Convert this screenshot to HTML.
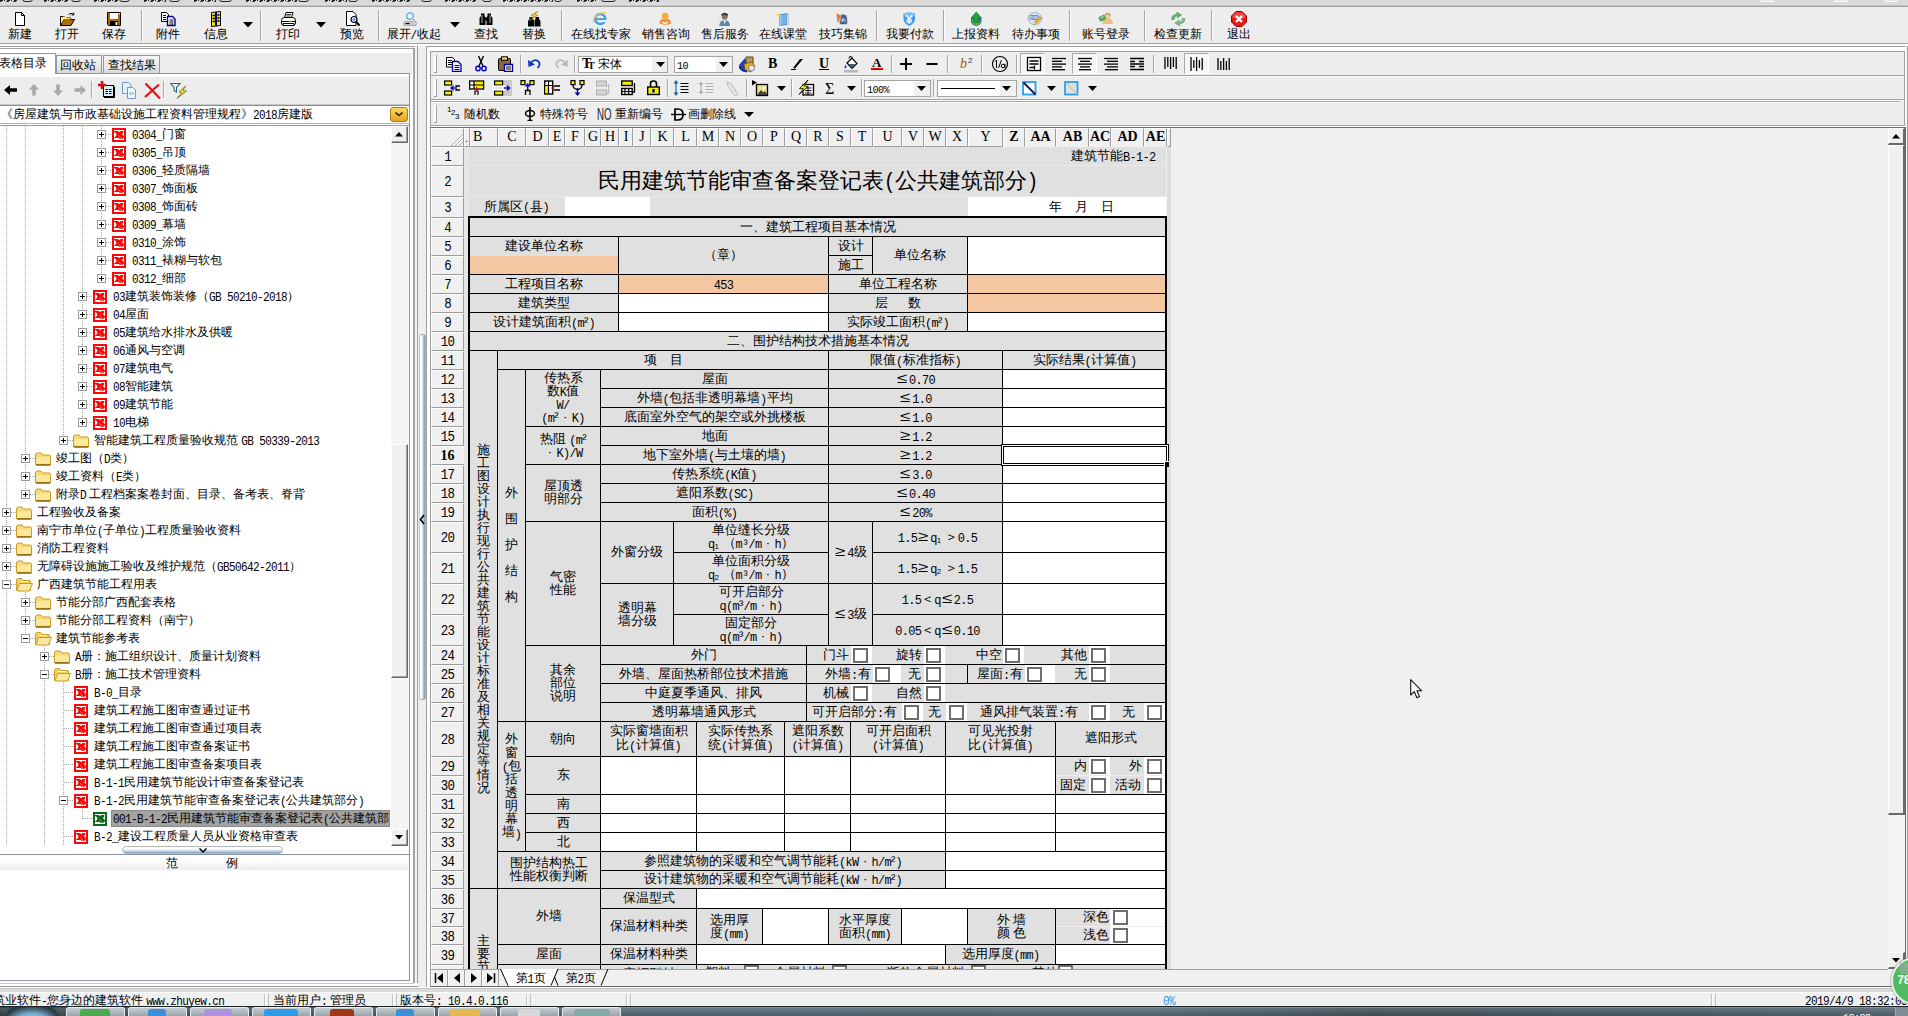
<!DOCTYPE html>
<html><head><meta charset="utf-8"><title>UI</title>
<style>
html,body{margin:0;padding:0}
body{width:1908px;height:1016px;overflow:hidden;background:#f0f0f0;position:relative;font-family:"Liberation Sans",sans-serif;font-size:12px;color:#000}
div,span.t,svg{position:absolute}
div{box-sizing:border-box;overflow:hidden}
span.t{white-space:nowrap;display:block}
span.c{text-align:center}
span.d{display:inline-block;width:1em;text-align:center;line-height:1}
span.w{display:inline-block;width:1em;text-align:center;transform:scale(1.45,1.1);line-height:1}
span.a{font-family:'Liberation Mono',monospace;font-size:92%;letter-spacing:-.0565em;display:inline-block;transform:scaleY(1.12);transform-origin:50% 78%;white-space:pre;position:relative;top:2.800px;line-height:1;vertical-align:top}
.cell{border:1px solid #000;background:#e0e0e0}
.cw{background:#fff}
.cp{background:#f4c7a1}
.sf{font-size:13px}
.cb{border:2px solid #6e6e6e;background:#fff}

.sc>span{position:relative;top:-1px}
.sc span.a,.s13 span.a{top:4.300px}
.sc{display:flex;align-items:center;justify-content:center;text-align:center;font-size:13px;line-height:13px;white-space:nowrap}
.nb{background:#e0e0e0}
</style></head><body>
<div style="left:0px;top:0px;width:1908px;height:6px;background:linear-gradient(#d6d6d6,#dedede)"></div>
<div style="left:0px;top:0px;width:17px;height:2px;background:repeating-linear-gradient(90deg,#181818 0 3px,#d8d8d8 3px 4px,#333 4px 5px,#d8d8d8 5px 7px)"></div>
<div style="left:0px;top:1px;width:17px;height:1px;background:repeating-linear-gradient(90deg,#444 0 2px,#d8d8d8 2px 6px,#555 6px 7px)"></div>
<div style="left:44px;top:0px;width:25px;height:2px;background:repeating-linear-gradient(90deg,#181818 0 3px,#d8d8d8 3px 4px,#333 4px 5px,#d8d8d8 5px 7px)"></div>
<div style="left:44px;top:1px;width:25px;height:1px;background:repeating-linear-gradient(90deg,#444 0 2px,#d8d8d8 2px 6px,#555 6px 7px)"></div>
<div style="left:94px;top:0px;width:24px;height:2px;background:repeating-linear-gradient(90deg,#181818 0 3px,#d8d8d8 3px 4px,#333 4px 5px,#d8d8d8 5px 7px)"></div>
<div style="left:94px;top:1px;width:24px;height:1px;background:repeating-linear-gradient(90deg,#444 0 2px,#d8d8d8 2px 6px,#555 6px 7px)"></div>
<div style="left:144px;top:0px;width:22px;height:2px;background:repeating-linear-gradient(90deg,#181818 0 3px,#d8d8d8 3px 4px,#333 4px 5px,#d8d8d8 5px 7px)"></div>
<div style="left:144px;top:1px;width:22px;height:1px;background:repeating-linear-gradient(90deg,#444 0 2px,#d8d8d8 2px 6px,#555 6px 7px)"></div>
<div style="left:194px;top:0px;width:22px;height:2px;background:repeating-linear-gradient(90deg,#181818 0 3px,#d8d8d8 3px 4px,#333 4px 5px,#d8d8d8 5px 7px)"></div>
<div style="left:194px;top:1px;width:22px;height:1px;background:repeating-linear-gradient(90deg,#444 0 2px,#d8d8d8 2px 6px,#555 6px 7px)"></div>
<div style="left:246px;top:0px;width:51px;height:2px;background:repeating-linear-gradient(90deg,#181818 0 3px,#d8d8d8 3px 4px,#333 4px 5px,#d8d8d8 5px 7px)"></div>
<div style="left:246px;top:1px;width:51px;height:1px;background:repeating-linear-gradient(90deg,#444 0 2px,#d8d8d8 2px 6px,#555 6px 7px)"></div>
<div style="left:325px;top:0px;width:22px;height:2px;background:repeating-linear-gradient(90deg,#181818 0 3px,#d8d8d8 3px 4px,#333 4px 5px,#d8d8d8 5px 7px)"></div>
<div style="left:325px;top:1px;width:22px;height:1px;background:repeating-linear-gradient(90deg,#444 0 2px,#d8d8d8 2px 6px,#555 6px 7px)"></div>
<div style="left:372px;top:0px;width:39px;height:2px;background:repeating-linear-gradient(90deg,#181818 0 3px,#d8d8d8 3px 4px,#333 4px 5px,#d8d8d8 5px 7px)"></div>
<div style="left:372px;top:1px;width:39px;height:1px;background:repeating-linear-gradient(90deg,#444 0 2px,#d8d8d8 2px 6px,#555 6px 7px)"></div>
<div style="left:445px;top:0px;width:32px;height:2px;background:repeating-linear-gradient(90deg,#181818 0 3px,#d8d8d8 3px 4px,#333 4px 5px,#d8d8d8 5px 7px)"></div>
<div style="left:445px;top:1px;width:32px;height:1px;background:repeating-linear-gradient(90deg,#444 0 2px,#d8d8d8 2px 6px,#555 6px 7px)"></div>
<div style="left:503px;top:0px;width:50px;height:2px;background:repeating-linear-gradient(90deg,#181818 0 3px,#d8d8d8 3px 4px,#333 4px 5px,#d8d8d8 5px 7px)"></div>
<div style="left:503px;top:1px;width:50px;height:1px;background:repeating-linear-gradient(90deg,#444 0 2px,#d8d8d8 2px 6px,#555 6px 7px)"></div>
<div style="left:577px;top:0px;width:20px;height:2px;background:repeating-linear-gradient(90deg,#181818 0 3px,#d8d8d8 3px 4px,#333 4px 5px,#d8d8d8 5px 7px)"></div>
<div style="left:577px;top:1px;width:20px;height:1px;background:repeating-linear-gradient(90deg,#444 0 2px,#d8d8d8 2px 6px,#555 6px 7px)"></div>
<div style="left:629px;top:0px;width:30px;height:2px;background:repeating-linear-gradient(90deg,#181818 0 3px,#d8d8d8 3px 4px,#333 4px 5px,#d8d8d8 5px 7px)"></div>
<div style="left:629px;top:1px;width:30px;height:1px;background:repeating-linear-gradient(90deg,#444 0 2px,#d8d8d8 2px 6px,#555 6px 7px)"></div>
<div style="left:22px;top:-3px;width:11px;height:5px;border:1px solid #222;border-radius:0 0 3px 3px;background:#d8d8d8"></div>
<div style="left:71px;top:-3px;width:10px;height:5px;border:1px solid #222;border-radius:0 0 3px 3px;background:#d8d8d8"></div>
<div style="left:119px;top:-3px;width:11px;height:5px;border:1px solid #222;border-radius:0 0 3px 3px;background:#d8d8d8"></div>
<div style="left:169px;top:-3px;width:11px;height:5px;border:1px solid #222;border-radius:0 0 3px 3px;background:#d8d8d8"></div>
<div style="left:219px;top:-3px;width:13px;height:5px;border:1px solid #222;border-radius:0 0 3px 3px;background:#d8d8d8"></div>
<div style="left:298px;top:-3px;width:11px;height:5px;border:1px solid #222;border-radius:0 0 3px 3px;background:#d8d8d8"></div>
<div style="left:348px;top:-3px;width:10px;height:5px;border:1px solid #222;border-radius:0 0 3px 3px;background:#d8d8d8"></div>
<div style="left:421px;top:-3px;width:11px;height:5px;border:1px solid #222;border-radius:0 0 3px 3px;background:#d8d8d8"></div>
<div style="left:482px;top:-3px;width:10px;height:5px;border:1px solid #222;border-radius:0 0 3px 3px;background:#d8d8d8"></div>
<div style="left:554px;top:-3px;width:8px;height:5px;border:1px solid #222;border-radius:0 0 3px 3px;background:#d8d8d8"></div>
<div style="left:601px;top:-3px;width:15px;height:5px;border:1px solid #222;border-radius:0 0 3px 3px;background:#d8d8d8"></div>
<div style="left:1760px;top:0px;width:14px;height:2px;border:1px solid #fff;border-top:none;border-radius:0 0 2px 2px;background:#e8e4e0"></div>
<div style="left:1834px;top:0px;width:14px;height:2px;border:1px solid #fff;border-top:none;border-radius:0 0 2px 2px;background:#e8e4e0"></div>
<div style="left:1884px;top:0px;width:14px;height:2px;border:1px solid #fff;border-top:none;border-radius:0 0 2px 2px;background:#e8e4e0"></div>
<div style="left:0px;top:5px;width:1908px;height:1px;background:#c4c4c4"></div>
<div style="left:0px;top:6px;width:1908px;height:1px;background:#a2a2a2"></div>
<div style="left:0px;top:7px;width:1908px;height:36px;background:#ededed"></div>
<div style="left:0px;top:43px;width:1908px;height:1px;background:#a0a0a0"></div>
<div style="left:0px;top:44px;width:1908px;height:2px;background:#fff"></div>
<svg style="left:11.5px;top:11px" width="16" height="16" viewBox="0 0 16 16"><path d="M3.5 1.5h6l3 3v10h-9z" fill="#fff" stroke="#000"/><path d="M9.5 1.5v3h3" fill="none" stroke="#000"/></svg>
<span class="t c" style="left:-40.5px;top:28px;width:120px;font-size:12px;line-height:12px;">新建</span>
<svg style="left:58.5px;top:11px" width="16" height="16" viewBox="0 0 16 16"><path d="M1.5 5.5h4l1 1h5v2" fill="#ffe680" stroke="#000"/><path d="M1.5 14.5v-9" stroke="#000"/><path d="M1.5 14.5l3-6h11l-3.5 6z" fill="#a87000" stroke="#000"/><path d="M2 8l2-2.5h3l1 1h3.5v2H4.5L2 13z" fill="#ffec70"/><path d="M9.5 3.5q2.5-2.5 5 0M14.8 1.5v2.4h-2.4" fill="none" stroke="#000"/></svg>
<span class="t c" style="left:6.5px;top:28px;width:120px;font-size:12px;line-height:12px;">打开</span>
<svg style="left:105.5px;top:11px" width="16" height="16" viewBox="0 0 16 16"><path d="M1.5 1.5h13v13h-12l-1-1z" fill="#a86c00" stroke="#000"/><rect x="4" y="2" width="8" height="6" fill="#fff"/><rect x="4" y="10" width="8" height="4.5" fill="#000"/><rect x="9.5" y="11" width="1.8" height="3" fill="#fff"/><rect x="12.8" y="2.2" width="1.2" height="1.2" fill="#fff"/></svg>
<span class="t c" style="left:53.5px;top:28px;width:120px;font-size:12px;line-height:12px;">保存</span>
<div style="left:141px;top:10px;width:1px;height:31px;background:#a6a6a6"></div>
<div style="left:142px;top:10px;width:1px;height:31px;background:#fbfbfb"></div>
<svg style="left:160px;top:11px" width="16" height="16" viewBox="0 0 16 16"><path d="M1.5 1.5h5l2 2v7h-7z" fill="#fff" stroke="#000"/><path d="M3 4.5h3M3 6.5h3M3 8.5h3" stroke="#000"/><path d="M7.5 5.5h5l2.5 2.5v6.5h-7.5z" fill="#fff" stroke="#0000a0" stroke-width="1.4"/><path d="M9.5 9h4M9.5 11h4M9.5 13h4" stroke="#000"/></svg>
<span class="t c" style="left:108px;top:28px;width:120px;font-size:12px;line-height:12px;">附件</span>
<svg style="left:207.5px;top:11px" width="16" height="16" viewBox="0 0 16 16"><path d="M3.5 1.5l9-1v14l-9 1z" fill="#fff000" stroke="#000"/><path d="M8 1v14" stroke="#0000a0" stroke-width="2.2"/><path d="M4.5 4.5h2.4M4.5 7.5h2.4M4.5 10.5h2.4M9.4 4h2.2M9.4 7h2.2M9.4 10h2.2" stroke="#000" stroke-width="1.3"/></svg>
<span class="t c" style="left:155.5px;top:28px;width:120px;font-size:12px;line-height:12px;">信息</span>
<svg style="left:243px;top:22px" width="10" height="6" viewBox="0 0 10 6"><path d="M0 0h10l-5 5.5z" fill="#000"/></svg>
<div style="left:260px;top:10px;width:1px;height:31px;background:#a6a6a6"></div>
<div style="left:261px;top:10px;width:1px;height:31px;background:#fbfbfb"></div>
<svg style="left:279.5px;top:11px" width="16" height="16" viewBox="0 0 16 16"><path d="M4.5 6.5l1.5-5h7l-1.5 5z" fill="#fff" stroke="#000"/><path d="M6.5 3.5h4.5M6 5h4.5" stroke="#000" stroke-width=".8"/><path d="M1.5 9.5q0-3 3-3h8q3 0 3 3v2.500q0 2-2 2h-10q-2 0-2-2z" fill="#fff" stroke="#000"/><path d="M2 10.500h13" stroke="#000"/><path d="M3 12.5h11v2h-11z" fill="#fff" stroke="#000"/><rect x="8.500" y="9.6" width="3.500" height="1" fill="#f0d000"/></svg>
<span class="t c" style="left:227.5px;top:28px;width:120px;font-size:12px;line-height:12px;">打印</span>
<svg style="left:315.5px;top:22px" width="10" height="6" viewBox="0 0 10 6"><path d="M0 0h10l-5 5.5z" fill="#000"/></svg>
<svg style="left:343.5px;top:11px" width="16" height="16" viewBox="0 0 16 16"><path d="M2.500 .5h6.500l3 3v11h-9.500z" fill="#fff" stroke="#000"/><circle cx="10" cy="8.500" r="3" fill="#d8ecff" stroke="#000" stroke-width="1.200"/><circle cx="10" cy="8.500" r="1.300" fill="#3a8ee0"/><path d="M12.200 10.800l3.300 3.700" stroke="#000" stroke-width="2"/></svg>
<span class="t c" style="left:291.5px;top:28px;width:120px;font-size:12px;line-height:12px;">预览</span>
<div style="left:378px;top:10px;width:1px;height:31px;background:#a6a6a6"></div>
<div style="left:379px;top:10px;width:1px;height:31px;background:#fbfbfb"></div>
<svg style="left:403.25px;top:11.5px" width="16.5" height="14.025" viewBox="0 0 20 17"><rect x="1" y="11.500" width="15" height="5" rx="1" fill="#c8c8c8" stroke="#a0a0a0"/><path d="M3 14h5" stroke="#000" stroke-width="1.400"/><circle cx="8.500" cy="5" r="4" fill="#e8f6ff" stroke="#58a8e0" stroke-width="1.600"/><path d="M11.500 8l5 5.500" stroke="#f4f4ff" stroke-width="3.400"/><path d="M11.500 8l5 5.500" stroke="#4040a0" stroke-width="1"/></svg>
<span class="t c" style="left:353.5px;top:28px;width:120px;font-size:12px;line-height:12px;">展开<span class=a>/</span>收起</span>
<svg style="left:450px;top:22px" width="10" height="6" viewBox="0 0 10 6"><path d="M0 0h10l-5 5.5z" fill="#000"/></svg>
<svg style="left:478px;top:11px" width="16" height="16" viewBox="0 0 16 16"><path d="M1.500 14v-7l1.500-2v-2.500h3.500v2.500l1 1.500v7.500z" fill="#000"/><path d="M14.500 14v-7l-1.500-2v-2.500h-3.500v2.500l-1 1.500v7.500z" fill="#000"/><rect x="6.500" y="6.500" width="3" height="3" fill="#000"/><path d="M4 4v8M12 4v8" stroke="#fff" stroke-width=".7"/></svg>
<span class="t c" style="left:426px;top:28px;width:120px;font-size:12px;line-height:12px;">查找</span>
<svg style="left:525.5px;top:11px" width="16" height="16" viewBox="0 0 16 16"><path d="M2 15.500v-5.500l1.500-2v-2h3.500v2l1 1.500v6z" fill="#000"/><path d="M14.500 15.500v-5.500l-1.500-2v-2h-3.500v2l-1 1.500v6z" fill="#000"/><path d="M12 0l-7 4.500 3 .5-5 5 9-6-3.500-.5z" fill="#ffe000" stroke="#806000" stroke-width=".5"/></svg>
<span class="t c" style="left:473.5px;top:28px;width:120px;font-size:12px;line-height:12px;">替换</span>
<div style="left:561px;top:10px;width:1px;height:31px;background:#a6a6a6"></div>
<div style="left:562px;top:10px;width:1px;height:31px;background:#fbfbfb"></div>
<svg style="left:592.25px;top:11.5px" width="16.5" height="14.025" viewBox="0 0 20 17"><circle cx="10" cy="8.500" r="6" fill="none" stroke="#3fa0ec" stroke-width="3"/><rect x="5" y="7.500" width="11" height="2.200" fill="#3fa0ec"/><rect x="11" y="9.700" width="6" height="2.500" fill="#ededed"/><path d="M2 13q-2-5 6-10 6-3.500 9-1.500" fill="none" stroke="#f8c040" stroke-width="1.300"/></svg>
<span class="t c" style="left:540.5px;top:28px;width:120px;font-size:12px;line-height:12px;">在线找专家</span>
<svg style="left:657.25px;top:11.5px" width="16.5" height="14.025" viewBox="0 0 20 17"><ellipse cx="10" cy="13.500" rx="8" ry="3" fill="#f8e8d8"/><path d="M3 14q0-6 7-6t7 6q-7 3-14 0z" fill="#f09030"/><circle cx="10" cy="5" r="4.200" fill="#f6b040"/><path d="M6.500 12q3.500 3 7 0" stroke="#fff" stroke-width="1.600" fill="none"/></svg>
<span class="t c" style="left:605.5px;top:28px;width:120px;font-size:12px;line-height:12px;">销售咨询</span>
<svg style="left:716.25px;top:11.5px" width="16.5" height="14.025" viewBox="0 0 20 17"><path d="M4 17q0-7 6.500-7t6.500 7z" fill="#5f86a8"/><path d="M9 10l1.500 5 1.500-5z" fill="#fff"/><circle cx="10.500" cy="5.500" r="3.800" fill="#8a7260"/><path d="M7 4q3.500-4 7 0" stroke="#303030" stroke-width="2.200" fill="none"/><circle cx="5" cy="7" r="2.400" fill="#e8e8e8"/></svg>
<span class="t c" style="left:664.5px;top:28px;width:120px;font-size:12px;line-height:12px;">售后服务</span>
<svg style="left:774.75px;top:11.5px" width="16.5" height="14.025" viewBox="0 0 20 17"><path d="M5.500 3.500l9-1.500v13l-9 1.500z" fill="#6cb4e8" stroke="#3c7cb8"/><path d="M5.500 3.500l2 .5v13l-2-.5z" fill="#a8d4f4"/><path d="M14.500 2l2 1v12.500l-2 .5z" fill="#e0ecf4" stroke="#90a8c0" stroke-width=".6"/><path d="M4 .5l.8 2.200 2.200.8-2.200.8-.8 2.200-.8-2.200-2.200-.8 2.200-.8z" fill="#ffd020"/></svg>
<span class="t c" style="left:723px;top:28px;width:120px;font-size:12px;line-height:12px;">在线课堂</span>
<svg style="left:834.25px;top:11.5px" width="16.5" height="14.025" viewBox="0 0 20 17"><path d="M3 1.500l6 3-5 8z" fill="#f07040"/><path d="M9 4.500l6-1 1 9-7 2z" fill="#5890c8"/><path d="M4 12.500l5-8 3 10z" fill="#d0b090"/><path d="M9 3q5-1 7 5v7h-9z" fill="#405878" opacity=".85"/><circle cx="11.500" cy="10" r="2.500" fill="#c0d8f0"/><path d="M11 14l1.500-5" stroke="#203050"/></svg>
<span class="t c" style="left:782.5px;top:28px;width:120px;font-size:12px;line-height:12px;">技巧集锦</span>
<div style="left:876px;top:10px;width:1px;height:31px;background:#a6a6a6"></div>
<div style="left:877px;top:10px;width:1px;height:31px;background:#fbfbfb"></div>
<svg style="left:901.25px;top:11.5px" width="16.5" height="14.025" viewBox="0 0 20 17"><path d="M3 2q7-2.500 14 0v6q0 6-7 9-7-3-7-9z" fill="#3c9cf0"/><path d="M3 2q7-2.500 14 0v3q-7 3-14 0z" fill="#78c0f8"/><path d="M6.500 4l3.500 4.500 3.500-4.500M10 8.500v6M6.500 9.500h7M6.500 12h7" stroke="#fff" stroke-width="1.700" fill="none"/></svg>
<span class="t c" style="left:849.5px;top:28px;width:120px;font-size:12px;line-height:12px;">我要付款</span>
<div style="left:943px;top:10px;width:1px;height:31px;background:#a6a6a6"></div>
<div style="left:944px;top:10px;width:1px;height:31px;background:#fbfbfb"></div>
<svg style="left:967.75px;top:11.5px" width="16.5" height="14.025" viewBox="0 0 20 17"><circle cx="10" cy="10.500" r="6.500" fill="#2c70b8"/><path d="M5 9q3-2 4 1t4 1 2 3q-3 3-7 2t-3-7z" fill="#58b050"/><path d="M10 0l6.500 7.500h-3.500v5.500h-6v-5.500h-3.500z" fill="#20a038" stroke="#106020" stroke-width=".7"/></svg>
<span class="t c" style="left:916px;top:28px;width:120px;font-size:12px;line-height:12px;">上报资料</span>
<svg style="left:1027.25px;top:11.5px" width="16.5" height="14.025" viewBox="0 0 20 17"><ellipse cx="9.500" cy="8" rx="8.500" ry="7.500" fill="#d8e4f0" stroke="#98acc4"/><rect x="3" y="4" width="11" height="5.500" rx="1" fill="#3878c8"/><text x="8.500" y="8.600" font-size="5" font-weight="bold" font-family="Liberation Sans" fill="#fff" text-anchor="middle">DVD</text><path d="M8 15.500l1-3 6.500-7 2 2-6.500 7z" fill="#f0b030" stroke="#a06800" stroke-width=".6"/><path d="M8 15.500l1-3 2 2z" fill="#f8e0b0"/></svg>
<span class="t c" style="left:975.5px;top:28px;width:120px;font-size:12px;line-height:12px;">待办事项</span>
<div style="left:1069px;top:10px;width:1px;height:31px;background:#a6a6a6"></div>
<div style="left:1070px;top:10px;width:1px;height:31px;background:#fbfbfb"></div>
<svg style="left:1097.75px;top:11.5px" width="16.5" height="12.75" viewBox="0 0 22 17"><path d="M6 16q0-7 7-7t7 7z" fill="#e8c080"/><circle cx="13" cy="5.500" r="4" fill="#f0c890"/><path d="M9.500 4q3.500-4 7 0" stroke="#c89850" stroke-width="1.800" fill="none"/><path d="M1 7.500l7-3.500 2.500 5-7 3.500z" fill="#58a868" stroke="#2c7040" stroke-width=".7"/><path d="M3.500 8l4-2" stroke="#d0f0d8" stroke-width="1.200"/></svg>
<span class="t c" style="left:1046px;top:28px;width:120px;font-size:12px;line-height:12px;">账号登录</span>
<div style="left:1144px;top:10px;width:1px;height:31px;background:#a6a6a6"></div>
<div style="left:1145px;top:10px;width:1px;height:31px;background:#fbfbfb"></div>
<svg style="left:1169.75px;top:11.5px" width="16.5" height="14.025" viewBox="0 0 20 17"><path d="M2 9q0-6 7-6.500l-1-2.500 6 3.500-5 3.500v-2.500q-4 0-4 4.500z" fill="#68b868" stroke="#3c8848" stroke-width=".7"/><path d="M18 8q0 6-7 6.500l1 2.500-6-3.500 5-3.500v2.500q4 0 4-4.500z" fill="#88c088" stroke="#3c8848" stroke-width=".7"/></svg>
<span class="t c" style="left:1118px;top:28px;width:120px;font-size:12px;line-height:12px;">检查更新</span>
<div style="left:1211px;top:10px;width:1px;height:31px;background:#a6a6a6"></div>
<div style="left:1212px;top:10px;width:1px;height:31px;background:#fbfbfb"></div>
<svg style="left:1230.5px;top:11px" width="16" height="16" viewBox="0 0 16 16"><path d="M5 .500h6l4.500 4.500v6l-4.500 4.500h-6l-4.500-4.500v-6z" fill="#e81818" stroke="#a00000"/><path d="M5 1.500h6l3.500 3.500v1.500q-6.500 2.500-13 0v-1.500z" fill="#f86060" opacity=".7"/><path d="M5 5l6 6M11 5l-6 6" stroke="#fff" stroke-width="2.400"/></svg>
<span class="t c" style="left:1178.5px;top:28px;width:120px;font-size:12px;line-height:12px;">退出</span>
<div style="left:0px;top:46px;width:417px;height:942px;background:#fff"></div>
<div style="left:0px;top:46px;width:417px;height:1px;background:#a0a0a0"></div>
<div style="left:0px;top:48px;width:414px;height:1px;background:#a0a0a0"></div>
<div style="left:413px;top:48px;width:2px;height:938px;background:#a4a4a4"></div>
<div style="left:415px;top:46px;width:2px;height:942px;background:#f4f4f4"></div>
<div style="left:417px;top:45px;width:1px;height:944px;background:#a0a0a0"></div>
<div style="left:0px;top:53px;width:412px;height:21px;background:#ececec"></div>
<div style="left:56px;top:55px;width:46px;height:19px;background:linear-gradient(#f4f4f4,#eaeaea 50%,#d6d6d6);border:1px solid #8c98ac;border-bottom:none"></div>
<div style="left:103px;top:55px;width:57px;height:19px;background:linear-gradient(#f4f4f4,#eaeaea 50%,#d6d6d6);border:1px solid #8c98ac;border-bottom:none"></div>
<div style="left:-1px;top:53px;width:57px;height:22px;background:#fff;border:1px solid #8c98ac;border-bottom:none"></div>
<span class="t" style="left:-1px;top:57px;font-size:12px;line-height:12px;">表格目录</span>
<span class="t" style="left:60px;top:59px;font-size:12px;line-height:12px;">回收站</span>
<span class="t" style="left:108px;top:59px;font-size:12px;line-height:12px;">查找结果</span>
<div style="left:55px;top:73px;width:355px;height:1px;background:#8a94a6"></div>
<div style="left:409px;top:73px;width:1px;height:909px;background:#8a94a6"></div>
<div style="left:0px;top:74px;width:409px;height:3px;background:#fff"></div>
<div style="left:0px;top:77px;width:409px;height:27px;background:#ededed"></div>
<svg style="left:4px;top:85px" width="14" height="10" viewBox="0 0 14 10"><path d="M0 5l6-5v3.200h7v3.600h-7v3.200z" fill="#000"/></svg>
<svg style="left:29px;top:84px" width="10" height="12" viewBox="0 0 10 12"><path d="M5 0l5 5.500h-3.200v6h-3.600v-6h-3.200z" fill="#a8a8a8"/></svg>
<svg style="left:52.5px;top:84px" width="10" height="12" viewBox="0 0 10 12"><path d="M5 12l5-5.500h-3.200v-6h-3.600v6h-3.200z" fill="#a8a8a8"/></svg>
<svg style="left:74px;top:85px" width="12" height="10" viewBox="0 0 12 10"><path d="M12 5l-5.500-5v3.200h-6v3.600h6v3.200z" fill="#a8a8a8"/></svg>
<div style="left:91px;top:81px;width:1px;height:17px;background:#a6a6a6"></div>
<div style="left:92px;top:81px;width:1px;height:17px;background:#fbfbfb"></div>
<svg style="left:98px;top:81px" width="17" height="17" viewBox="0 0 17 17"><rect x="5.500" y="4.500" width="10" height="11" fill="#d8f0fc" stroke="#000"/><path d="M6 16.500h10.500v-11" stroke="#000" fill="none"/><path d="M7.500 8.500h6M7.500 10.500h6M7.500 12.500h6" stroke="#000" stroke-dasharray="2.500 1"/><path d="M4 0v8M0 4h8" stroke="#d01010" stroke-width="2.600"/></svg>
<svg style="left:121px;top:82px" width="16" height="17" viewBox="0 0 16 17"><path d="M1.500 .5h6l2.500 2.500v8.500h-8.500z" fill="#e4f0fc" stroke="#7098c8"/><path d="M6.500 5.500h5.500l2.500 2.500v8.500h-8z" fill="#f0f8ff" stroke="#7098c8"/><rect x="8" y="10" width="5" height="3" fill="#a8d8f0"/></svg>
<svg style="left:144px;top:83px" width="17" height="16" viewBox="0 0 17 16"><path d="M1.500 .5l14.500 15M15 1.500l-14 12.500" stroke="#e81010" stroke-width="2.200"/></svg>
<div style="left:163px;top:81px;width:1px;height:17px;background:#a6a6a6"></div>
<div style="left:164px;top:81px;width:1px;height:17px;background:#fbfbfb"></div>
<svg style="left:170px;top:82px" width="18" height="17" viewBox="0 0 18 17"><path d="M.5 1.500h9.500l-3.500 4v4.500l-2.500-1.500v-3z" fill="#e8f4f8" stroke="#286878" stroke-width="1.100"/><path d="M15.500 4l-6.500 6 3 .5-5 6 9.500-7.500-3.500-.5z" fill="#f8e820" stroke="#605820" stroke-width=".7"/></svg>
<div style="left:0px;top:104px;width:409px;height:1px;background:#c8c8c8"></div>
<div style="left:0px;top:105px;width:409px;height:1px;background:#8c8c8c"></div>
<div style="left:0px;top:106px;width:409px;height:17px;background:#fff"></div>
<span class="t" style="left:1px;top:108px;font-size:12px;line-height:12px;">《房屋建筑与市政基础设施工程资料管理规程》<span class=a>2018</span>房建版</span>
<div style="left:390px;top:107px;width:18px;height:15px;background:linear-gradient(#f9d860,#e3a820);border:1px solid #b07c10;border-radius:3px"></div>
<svg style="left:395px;top:112px" width="8" height="5" viewBox="0 0 8 5"><path d="M0.5 0.5l3.5 3 3.5-3" stroke="#402800" stroke-width="1.6" fill="none"/></svg>
<div style="left:0px;top:123px;width:409px;height:1px;background:#b4b4b4"></div>
<div style="left:0px;top:124px;width:409px;height:1px;background:#fff"></div>
<div style="left:0px;top:125px;width:409px;height:1px;background:#9c9c9c"></div>
<div style="left:418px;top:46px;width:8px;height:942px;background:#eeeeee"></div>
<div style="left:419px;top:334px;width:7px;height:366px;background:linear-gradient(90deg,#fff 0 35%,#b8cfe0 60%,#7f9db5 100%);border-radius:3px 3px 3px 3px;border:1px solid #b0b0b0;border-left-color:#c8c8c8"></div>
<svg style="left:419px;top:514px" width="6" height="11" viewBox="0 0 6 11"><path d="M5 1L1.5 5.5 5 10" stroke="#000" stroke-width="1.6" fill="none"/></svg>
<div style="left:426px;top:46px;width:1482px;height:942px;background:#fff"></div>
<div style="left:426px;top:46px;width:1px;height:942px;background:#a0a0a0"></div>
<div style="left:426px;top:46px;width:1482px;height:1px;background:#a0a0a0"></div>
<div style="left:430px;top:51px;width:1475px;height:75px;background:#ededed;border:1px solid #a0a0a0"></div>
<div style="left:431px;top:75px;width:1473px;height:1px;background:#a0a0a0"></div>
<div style="left:431px;top:76px;width:1473px;height:1px;background:#fbfbfb"></div>
<div style="left:431px;top:99px;width:1473px;height:1px;background:#a0a0a0"></div>
<div style="left:431px;top:100px;width:1473px;height:1px;background:#fbfbfb"></div>
<div style="left:431px;top:101px;width:1469px;height:1px;background:#a8a8a8"></div>
<div style="left:431px;top:102px;width:1469px;height:1px;background:#fbfbfb"></div>
<div style="left:1906px;top:46px;width:1px;height:942px;background:#f8f8f8"></div>
<div style="left:1907px;top:46px;width:1px;height:942px;background:#a0a0a0"></div>
<div style="left:0px;top:126px;width:409px;height:728px;background:#fff"></div>
<div style="left:6px;top:126px;width:1px;height:720px;background:repeating-linear-gradient(180deg,#a8a8a8 0 1px,transparent 1px 2px)"></div>
<div style="left:25px;top:126px;width:1px;height:369px;background:repeating-linear-gradient(180deg,#a8a8a8 0 1px,transparent 1px 2px)"></div>
<div style="left:63px;top:126px;width:1px;height:315px;background:repeating-linear-gradient(180deg,#a8a8a8 0 1px,transparent 1px 2px)"></div>
<div style="left:82px;top:126px;width:1px;height:297px;background:repeating-linear-gradient(180deg,#a8a8a8 0 1px,transparent 1px 2px)"></div>
<div style="left:101px;top:126px;width:1px;height:153px;background:repeating-linear-gradient(180deg,#a8a8a8 0 1px,transparent 1px 2px)"></div>
<div style="left:25px;top:592px;width:1px;height:47px;background:repeating-linear-gradient(180deg,#a8a8a8 0 1px,transparent 1px 2px)"></div>
<div style="left:44px;top:646px;width:1px;height:200px;background:repeating-linear-gradient(180deg,#a8a8a8 0 1px,transparent 1px 2px)"></div>
<div style="left:63px;top:682px;width:1px;height:164px;background:repeating-linear-gradient(180deg,#a8a8a8 0 1px,transparent 1px 2px)"></div>
<div style="left:82px;top:808px;width:1px;height:11px;background:repeating-linear-gradient(180deg,#a8a8a8 0 1px,transparent 1px 2px)"></div>
<div style="left:106px;top:134px;width:6px;height:1px;background:repeating-linear-gradient(90deg,#a8a8a8 0 1px,transparent 1px 2px)"></div>
<div style="left:97px;top:130px;width:9px;height:9px;background:#fff;border:1px solid #9a9a9a"></div>
<div style="left:99px;top:134px;width:5px;height:1px;background:#000"></div>
<div style="left:101px;top:132px;width:1px;height:5px;background:#000"></div>
<svg style="left:112px;top:128px" width="14" height="14" viewBox="0 0 14 14"><rect width="14" height="14" fill="#f80808"/><rect x="2" y="2" width="10" height="10" fill="#fff"/><path d="M2 3h3.700l1.500 1.100 1.500-1.100h2.500v1.700l-1.900 1.900h1.700v1.100h1v2h-1.200v1h-3.600l-.300-.700h-4.900v-.600l1.200-.300 1.300-2.600-1.500-2.300h-1z" fill="#f80808"/><path d="M6.500 7.400l2.200 2.700" stroke="#fff" stroke-width=".700" stroke-dasharray=".700 .600"/></svg>
<span class="t" style="left:132px;top:128px;font-size:12px;line-height:12px;"><span class=a>0304_</span>门窗</span>
<div style="left:106px;top:152px;width:6px;height:1px;background:repeating-linear-gradient(90deg,#a8a8a8 0 1px,transparent 1px 2px)"></div>
<div style="left:97px;top:148px;width:9px;height:9px;background:#fff;border:1px solid #9a9a9a"></div>
<div style="left:99px;top:152px;width:5px;height:1px;background:#000"></div>
<div style="left:101px;top:150px;width:1px;height:5px;background:#000"></div>
<svg style="left:112px;top:146px" width="14" height="14" viewBox="0 0 14 14"><rect width="14" height="14" fill="#f80808"/><rect x="2" y="2" width="10" height="10" fill="#fff"/><path d="M2 3h3.700l1.500 1.100 1.500-1.100h2.500v1.700l-1.900 1.900h1.700v1.100h1v2h-1.200v1h-3.600l-.300-.700h-4.900v-.600l1.200-.300 1.300-2.600-1.500-2.300h-1z" fill="#f80808"/><path d="M6.500 7.400l2.200 2.700" stroke="#fff" stroke-width=".700" stroke-dasharray=".700 .600"/></svg>
<span class="t" style="left:132px;top:146px;font-size:12px;line-height:12px;"><span class=a>0305_</span>吊顶</span>
<div style="left:106px;top:170px;width:6px;height:1px;background:repeating-linear-gradient(90deg,#a8a8a8 0 1px,transparent 1px 2px)"></div>
<div style="left:97px;top:166px;width:9px;height:9px;background:#fff;border:1px solid #9a9a9a"></div>
<div style="left:99px;top:170px;width:5px;height:1px;background:#000"></div>
<div style="left:101px;top:168px;width:1px;height:5px;background:#000"></div>
<svg style="left:112px;top:164px" width="14" height="14" viewBox="0 0 14 14"><rect width="14" height="14" fill="#f80808"/><rect x="2" y="2" width="10" height="10" fill="#fff"/><path d="M2 3h3.700l1.500 1.100 1.500-1.100h2.500v1.700l-1.900 1.900h1.700v1.100h1v2h-1.200v1h-3.600l-.300-.700h-4.900v-.600l1.200-.300 1.300-2.600-1.500-2.300h-1z" fill="#f80808"/><path d="M6.500 7.400l2.200 2.700" stroke="#fff" stroke-width=".700" stroke-dasharray=".700 .600"/></svg>
<span class="t" style="left:132px;top:164px;font-size:12px;line-height:12px;"><span class=a>0306_</span>轻质隔墙</span>
<div style="left:106px;top:188px;width:6px;height:1px;background:repeating-linear-gradient(90deg,#a8a8a8 0 1px,transparent 1px 2px)"></div>
<div style="left:97px;top:184px;width:9px;height:9px;background:#fff;border:1px solid #9a9a9a"></div>
<div style="left:99px;top:188px;width:5px;height:1px;background:#000"></div>
<div style="left:101px;top:186px;width:1px;height:5px;background:#000"></div>
<svg style="left:112px;top:182px" width="14" height="14" viewBox="0 0 14 14"><rect width="14" height="14" fill="#f80808"/><rect x="2" y="2" width="10" height="10" fill="#fff"/><path d="M2 3h3.700l1.500 1.100 1.500-1.100h2.500v1.700l-1.900 1.900h1.700v1.100h1v2h-1.200v1h-3.600l-.300-.700h-4.900v-.600l1.200-.300 1.300-2.600-1.500-2.300h-1z" fill="#f80808"/><path d="M6.500 7.400l2.200 2.700" stroke="#fff" stroke-width=".700" stroke-dasharray=".700 .600"/></svg>
<span class="t" style="left:132px;top:182px;font-size:12px;line-height:12px;"><span class=a>0307_</span>饰面板</span>
<div style="left:106px;top:206px;width:6px;height:1px;background:repeating-linear-gradient(90deg,#a8a8a8 0 1px,transparent 1px 2px)"></div>
<div style="left:97px;top:202px;width:9px;height:9px;background:#fff;border:1px solid #9a9a9a"></div>
<div style="left:99px;top:206px;width:5px;height:1px;background:#000"></div>
<div style="left:101px;top:204px;width:1px;height:5px;background:#000"></div>
<svg style="left:112px;top:200px" width="14" height="14" viewBox="0 0 14 14"><rect width="14" height="14" fill="#f80808"/><rect x="2" y="2" width="10" height="10" fill="#fff"/><path d="M2 3h3.700l1.500 1.100 1.500-1.100h2.500v1.700l-1.900 1.900h1.700v1.100h1v2h-1.200v1h-3.600l-.300-.700h-4.900v-.600l1.200-.300 1.300-2.600-1.500-2.300h-1z" fill="#f80808"/><path d="M6.500 7.400l2.200 2.700" stroke="#fff" stroke-width=".700" stroke-dasharray=".700 .600"/></svg>
<span class="t" style="left:132px;top:200px;font-size:12px;line-height:12px;"><span class=a>0308_</span>饰面砖</span>
<div style="left:106px;top:224px;width:6px;height:1px;background:repeating-linear-gradient(90deg,#a8a8a8 0 1px,transparent 1px 2px)"></div>
<div style="left:97px;top:220px;width:9px;height:9px;background:#fff;border:1px solid #9a9a9a"></div>
<div style="left:99px;top:224px;width:5px;height:1px;background:#000"></div>
<div style="left:101px;top:222px;width:1px;height:5px;background:#000"></div>
<svg style="left:112px;top:218px" width="14" height="14" viewBox="0 0 14 14"><rect width="14" height="14" fill="#f80808"/><rect x="2" y="2" width="10" height="10" fill="#fff"/><path d="M2 3h3.700l1.500 1.100 1.500-1.100h2.500v1.700l-1.900 1.900h1.700v1.100h1v2h-1.200v1h-3.600l-.300-.700h-4.900v-.600l1.200-.300 1.300-2.600-1.500-2.300h-1z" fill="#f80808"/><path d="M6.500 7.400l2.200 2.700" stroke="#fff" stroke-width=".700" stroke-dasharray=".700 .600"/></svg>
<span class="t" style="left:132px;top:218px;font-size:12px;line-height:12px;"><span class=a>0309_</span>幕墙</span>
<div style="left:106px;top:242px;width:6px;height:1px;background:repeating-linear-gradient(90deg,#a8a8a8 0 1px,transparent 1px 2px)"></div>
<div style="left:97px;top:238px;width:9px;height:9px;background:#fff;border:1px solid #9a9a9a"></div>
<div style="left:99px;top:242px;width:5px;height:1px;background:#000"></div>
<div style="left:101px;top:240px;width:1px;height:5px;background:#000"></div>
<svg style="left:112px;top:236px" width="14" height="14" viewBox="0 0 14 14"><rect width="14" height="14" fill="#f80808"/><rect x="2" y="2" width="10" height="10" fill="#fff"/><path d="M2 3h3.700l1.500 1.100 1.500-1.100h2.500v1.700l-1.900 1.900h1.700v1.100h1v2h-1.200v1h-3.600l-.300-.700h-4.900v-.600l1.200-.300 1.300-2.600-1.500-2.300h-1z" fill="#f80808"/><path d="M6.500 7.400l2.200 2.700" stroke="#fff" stroke-width=".700" stroke-dasharray=".700 .600"/></svg>
<span class="t" style="left:132px;top:236px;font-size:12px;line-height:12px;"><span class=a>0310_</span>涂饰</span>
<div style="left:106px;top:260px;width:6px;height:1px;background:repeating-linear-gradient(90deg,#a8a8a8 0 1px,transparent 1px 2px)"></div>
<div style="left:97px;top:256px;width:9px;height:9px;background:#fff;border:1px solid #9a9a9a"></div>
<div style="left:99px;top:260px;width:5px;height:1px;background:#000"></div>
<div style="left:101px;top:258px;width:1px;height:5px;background:#000"></div>
<svg style="left:112px;top:254px" width="14" height="14" viewBox="0 0 14 14"><rect width="14" height="14" fill="#f80808"/><rect x="2" y="2" width="10" height="10" fill="#fff"/><path d="M2 3h3.700l1.500 1.100 1.500-1.100h2.500v1.700l-1.900 1.900h1.700v1.100h1v2h-1.200v1h-3.600l-.300-.700h-4.900v-.600l1.200-.300 1.300-2.600-1.500-2.300h-1z" fill="#f80808"/><path d="M6.500 7.400l2.200 2.700" stroke="#fff" stroke-width=".700" stroke-dasharray=".700 .600"/></svg>
<span class="t" style="left:132px;top:254px;font-size:12px;line-height:12px;"><span class=a>0311_</span>裱糊与软包</span>
<div style="left:106px;top:278px;width:6px;height:1px;background:repeating-linear-gradient(90deg,#a8a8a8 0 1px,transparent 1px 2px)"></div>
<div style="left:97px;top:274px;width:9px;height:9px;background:#fff;border:1px solid #9a9a9a"></div>
<div style="left:99px;top:278px;width:5px;height:1px;background:#000"></div>
<div style="left:101px;top:276px;width:1px;height:5px;background:#000"></div>
<svg style="left:112px;top:272px" width="14" height="14" viewBox="0 0 14 14"><rect width="14" height="14" fill="#f80808"/><rect x="2" y="2" width="10" height="10" fill="#fff"/><path d="M2 3h3.700l1.500 1.100 1.500-1.100h2.500v1.700l-1.900 1.900h1.700v1.100h1v2h-1.200v1h-3.600l-.300-.700h-4.900v-.600l1.200-.300 1.300-2.600-1.500-2.300h-1z" fill="#f80808"/><path d="M6.500 7.400l2.200 2.700" stroke="#fff" stroke-width=".700" stroke-dasharray=".700 .600"/></svg>
<span class="t" style="left:132px;top:272px;font-size:12px;line-height:12px;"><span class=a>0312_</span>细部</span>
<div style="left:87px;top:296px;width:6px;height:1px;background:repeating-linear-gradient(90deg,#a8a8a8 0 1px,transparent 1px 2px)"></div>
<div style="left:78px;top:292px;width:9px;height:9px;background:#fff;border:1px solid #9a9a9a"></div>
<div style="left:80px;top:296px;width:5px;height:1px;background:#000"></div>
<div style="left:82px;top:294px;width:1px;height:5px;background:#000"></div>
<svg style="left:93px;top:290px" width="14" height="14" viewBox="0 0 14 14"><rect width="14" height="14" fill="#f80808"/><rect x="2" y="2" width="10" height="10" fill="#fff"/><path d="M2 3h3.700l1.500 1.100 1.500-1.100h2.500v1.700l-1.900 1.900h1.700v1.100h1v2h-1.200v1h-3.600l-.300-.700h-4.900v-.600l1.200-.300 1.300-2.600-1.500-2.300h-1z" fill="#f80808"/><path d="M6.500 7.400l2.200 2.700" stroke="#fff" stroke-width=".700" stroke-dasharray=".700 .600"/></svg>
<span class="t" style="left:113px;top:290px;font-size:12px;line-height:12px;"><span class=a>03</span>建筑装饰装修（<span class=a>GB 50210-2018</span>）</span>
<div style="left:87px;top:314px;width:6px;height:1px;background:repeating-linear-gradient(90deg,#a8a8a8 0 1px,transparent 1px 2px)"></div>
<div style="left:78px;top:310px;width:9px;height:9px;background:#fff;border:1px solid #9a9a9a"></div>
<div style="left:80px;top:314px;width:5px;height:1px;background:#000"></div>
<div style="left:82px;top:312px;width:1px;height:5px;background:#000"></div>
<svg style="left:93px;top:308px" width="14" height="14" viewBox="0 0 14 14"><rect width="14" height="14" fill="#f80808"/><rect x="2" y="2" width="10" height="10" fill="#fff"/><path d="M2 3h3.700l1.500 1.100 1.500-1.100h2.500v1.700l-1.900 1.900h1.700v1.100h1v2h-1.200v1h-3.600l-.300-.700h-4.900v-.600l1.200-.300 1.300-2.600-1.500-2.300h-1z" fill="#f80808"/><path d="M6.500 7.400l2.200 2.700" stroke="#fff" stroke-width=".700" stroke-dasharray=".700 .600"/></svg>
<span class="t" style="left:113px;top:308px;font-size:12px;line-height:12px;"><span class=a>04</span>屋面</span>
<div style="left:87px;top:332px;width:6px;height:1px;background:repeating-linear-gradient(90deg,#a8a8a8 0 1px,transparent 1px 2px)"></div>
<div style="left:78px;top:328px;width:9px;height:9px;background:#fff;border:1px solid #9a9a9a"></div>
<div style="left:80px;top:332px;width:5px;height:1px;background:#000"></div>
<div style="left:82px;top:330px;width:1px;height:5px;background:#000"></div>
<svg style="left:93px;top:326px" width="14" height="14" viewBox="0 0 14 14"><rect width="14" height="14" fill="#f80808"/><rect x="2" y="2" width="10" height="10" fill="#fff"/><path d="M2 3h3.700l1.500 1.100 1.500-1.100h2.500v1.700l-1.900 1.900h1.700v1.100h1v2h-1.200v1h-3.600l-.300-.700h-4.900v-.600l1.200-.300 1.300-2.600-1.500-2.300h-1z" fill="#f80808"/><path d="M6.500 7.400l2.200 2.700" stroke="#fff" stroke-width=".700" stroke-dasharray=".700 .600"/></svg>
<span class="t" style="left:113px;top:326px;font-size:12px;line-height:12px;"><span class=a>05</span>建筑给水排水及供暖</span>
<div style="left:87px;top:350px;width:6px;height:1px;background:repeating-linear-gradient(90deg,#a8a8a8 0 1px,transparent 1px 2px)"></div>
<div style="left:78px;top:346px;width:9px;height:9px;background:#fff;border:1px solid #9a9a9a"></div>
<div style="left:80px;top:350px;width:5px;height:1px;background:#000"></div>
<div style="left:82px;top:348px;width:1px;height:5px;background:#000"></div>
<svg style="left:93px;top:344px" width="14" height="14" viewBox="0 0 14 14"><rect width="14" height="14" fill="#f80808"/><rect x="2" y="2" width="10" height="10" fill="#fff"/><path d="M2 3h3.700l1.500 1.100 1.500-1.100h2.500v1.700l-1.900 1.900h1.700v1.100h1v2h-1.200v1h-3.600l-.300-.700h-4.900v-.600l1.200-.300 1.300-2.600-1.500-2.300h-1z" fill="#f80808"/><path d="M6.500 7.400l2.200 2.700" stroke="#fff" stroke-width=".700" stroke-dasharray=".700 .600"/></svg>
<span class="t" style="left:113px;top:344px;font-size:12px;line-height:12px;"><span class=a>06</span>通风与空调</span>
<div style="left:87px;top:368px;width:6px;height:1px;background:repeating-linear-gradient(90deg,#a8a8a8 0 1px,transparent 1px 2px)"></div>
<div style="left:78px;top:364px;width:9px;height:9px;background:#fff;border:1px solid #9a9a9a"></div>
<div style="left:80px;top:368px;width:5px;height:1px;background:#000"></div>
<div style="left:82px;top:366px;width:1px;height:5px;background:#000"></div>
<svg style="left:93px;top:362px" width="14" height="14" viewBox="0 0 14 14"><rect width="14" height="14" fill="#f80808"/><rect x="2" y="2" width="10" height="10" fill="#fff"/><path d="M2 3h3.700l1.500 1.100 1.500-1.100h2.500v1.700l-1.900 1.900h1.700v1.100h1v2h-1.200v1h-3.600l-.300-.700h-4.900v-.600l1.200-.300 1.300-2.600-1.500-2.300h-1z" fill="#f80808"/><path d="M6.500 7.400l2.200 2.700" stroke="#fff" stroke-width=".700" stroke-dasharray=".700 .600"/></svg>
<span class="t" style="left:113px;top:362px;font-size:12px;line-height:12px;"><span class=a>07</span>建筑电气</span>
<div style="left:87px;top:386px;width:6px;height:1px;background:repeating-linear-gradient(90deg,#a8a8a8 0 1px,transparent 1px 2px)"></div>
<div style="left:78px;top:382px;width:9px;height:9px;background:#fff;border:1px solid #9a9a9a"></div>
<div style="left:80px;top:386px;width:5px;height:1px;background:#000"></div>
<div style="left:82px;top:384px;width:1px;height:5px;background:#000"></div>
<svg style="left:93px;top:380px" width="14" height="14" viewBox="0 0 14 14"><rect width="14" height="14" fill="#f80808"/><rect x="2" y="2" width="10" height="10" fill="#fff"/><path d="M2 3h3.700l1.500 1.100 1.500-1.100h2.500v1.700l-1.900 1.900h1.700v1.100h1v2h-1.200v1h-3.600l-.300-.700h-4.900v-.600l1.200-.300 1.300-2.600-1.500-2.300h-1z" fill="#f80808"/><path d="M6.500 7.400l2.200 2.700" stroke="#fff" stroke-width=".700" stroke-dasharray=".700 .600"/></svg>
<span class="t" style="left:113px;top:380px;font-size:12px;line-height:12px;"><span class=a>08</span>智能建筑</span>
<div style="left:87px;top:404px;width:6px;height:1px;background:repeating-linear-gradient(90deg,#a8a8a8 0 1px,transparent 1px 2px)"></div>
<div style="left:78px;top:400px;width:9px;height:9px;background:#fff;border:1px solid #9a9a9a"></div>
<div style="left:80px;top:404px;width:5px;height:1px;background:#000"></div>
<div style="left:82px;top:402px;width:1px;height:5px;background:#000"></div>
<svg style="left:93px;top:398px" width="14" height="14" viewBox="0 0 14 14"><rect width="14" height="14" fill="#f80808"/><rect x="2" y="2" width="10" height="10" fill="#fff"/><path d="M2 3h3.700l1.500 1.100 1.500-1.100h2.500v1.700l-1.900 1.900h1.700v1.100h1v2h-1.200v1h-3.600l-.300-.700h-4.900v-.600l1.200-.300 1.300-2.600-1.500-2.300h-1z" fill="#f80808"/><path d="M6.500 7.400l2.200 2.700" stroke="#fff" stroke-width=".700" stroke-dasharray=".700 .600"/></svg>
<span class="t" style="left:113px;top:398px;font-size:12px;line-height:12px;"><span class=a>09</span>建筑节能</span>
<div style="left:87px;top:422px;width:6px;height:1px;background:repeating-linear-gradient(90deg,#a8a8a8 0 1px,transparent 1px 2px)"></div>
<div style="left:78px;top:418px;width:9px;height:9px;background:#fff;border:1px solid #9a9a9a"></div>
<div style="left:80px;top:422px;width:5px;height:1px;background:#000"></div>
<div style="left:82px;top:420px;width:1px;height:5px;background:#000"></div>
<svg style="left:93px;top:416px" width="14" height="14" viewBox="0 0 14 14"><rect width="14" height="14" fill="#f80808"/><rect x="2" y="2" width="10" height="10" fill="#fff"/><path d="M2 3h3.700l1.500 1.100 1.500-1.100h2.500v1.700l-1.900 1.900h1.700v1.100h1v2h-1.200v1h-3.600l-.300-.700h-4.900v-.600l1.200-.300 1.300-2.600-1.500-2.300h-1z" fill="#f80808"/><path d="M6.500 7.400l2.200 2.700" stroke="#fff" stroke-width=".700" stroke-dasharray=".700 .600"/></svg>
<span class="t" style="left:113px;top:416px;font-size:12px;line-height:12px;"><span class=a>10</span>电梯</span>
<div style="left:68px;top:440px;width:6px;height:1px;background:repeating-linear-gradient(90deg,#a8a8a8 0 1px,transparent 1px 2px)"></div>
<div style="left:59px;top:436px;width:9px;height:9px;background:#fff;border:1px solid #9a9a9a"></div>
<div style="left:61px;top:440px;width:5px;height:1px;background:#000"></div>
<div style="left:63px;top:438px;width:1px;height:5px;background:#000"></div>
<svg style="left:73px;top:434px" width="16" height="14" viewBox="0 0 16 14"><path d="M.5 3q0-2 2-2h3.500l1.500 2h6.500q1.500 0 1.500 1.500v7.500q0 1.500-1.500 1.500h-12q-1.500 0-1.500-1.500z" fill="#f8dc78" stroke="#c89a28"/><path d="M1 5.500h14v6.500q0 1-1 1h-12q-1 0-1-1z" fill="#fbe89a"/><path d="M1 12.700h14.500" stroke="#9a7418" stroke-width="1.500"/></svg>
<span class="t" style="left:94px;top:434px;font-size:12px;line-height:12px;">智能建筑工程质量验收规范 <span class=a>GB 50339-2013</span></span>
<div style="left:30px;top:458px;width:6px;height:1px;background:repeating-linear-gradient(90deg,#a8a8a8 0 1px,transparent 1px 2px)"></div>
<div style="left:21px;top:454px;width:9px;height:9px;background:#fff;border:1px solid #9a9a9a"></div>
<div style="left:23px;top:458px;width:5px;height:1px;background:#000"></div>
<div style="left:25px;top:456px;width:1px;height:5px;background:#000"></div>
<svg style="left:35px;top:452px" width="16" height="14" viewBox="0 0 16 14"><path d="M.5 3q0-2 2-2h3.500l1.500 2h6.500q1.500 0 1.500 1.500v7.500q0 1.500-1.500 1.500h-12q-1.500 0-1.500-1.500z" fill="#f8dc78" stroke="#c89a28"/><path d="M1 5.500h14v6.500q0 1-1 1h-12q-1 0-1-1z" fill="#fbe89a"/><path d="M1 12.700h14.500" stroke="#9a7418" stroke-width="1.500"/></svg>
<span class="t" style="left:56px;top:452px;font-size:12px;line-height:12px;">竣工图（<span class=a>D</span>类）</span>
<div style="left:30px;top:476px;width:6px;height:1px;background:repeating-linear-gradient(90deg,#a8a8a8 0 1px,transparent 1px 2px)"></div>
<div style="left:21px;top:472px;width:9px;height:9px;background:#fff;border:1px solid #9a9a9a"></div>
<div style="left:23px;top:476px;width:5px;height:1px;background:#000"></div>
<div style="left:25px;top:474px;width:1px;height:5px;background:#000"></div>
<svg style="left:35px;top:470px" width="16" height="14" viewBox="0 0 16 14"><path d="M.5 3q0-2 2-2h3.500l1.500 2h6.500q1.500 0 1.500 1.500v7.500q0 1.500-1.500 1.500h-12q-1.500 0-1.500-1.500z" fill="#f8dc78" stroke="#c89a28"/><path d="M1 5.500h14v6.500q0 1-1 1h-12q-1 0-1-1z" fill="#fbe89a"/><path d="M1 12.700h14.500" stroke="#9a7418" stroke-width="1.500"/></svg>
<span class="t" style="left:56px;top:470px;font-size:12px;line-height:12px;">竣工资料（<span class=a>E</span>类）</span>
<div style="left:30px;top:494px;width:6px;height:1px;background:repeating-linear-gradient(90deg,#a8a8a8 0 1px,transparent 1px 2px)"></div>
<div style="left:21px;top:490px;width:9px;height:9px;background:#fff;border:1px solid #9a9a9a"></div>
<div style="left:23px;top:494px;width:5px;height:1px;background:#000"></div>
<div style="left:25px;top:492px;width:1px;height:5px;background:#000"></div>
<svg style="left:35px;top:488px" width="16" height="14" viewBox="0 0 16 14"><path d="M.5 3q0-2 2-2h3.500l1.500 2h6.500q1.500 0 1.500 1.500v7.500q0 1.500-1.500 1.500h-12q-1.500 0-1.500-1.500z" fill="#f8dc78" stroke="#c89a28"/><path d="M1 5.500h14v6.500q0 1-1 1h-12q-1 0-1-1z" fill="#fbe89a"/><path d="M1 12.700h14.500" stroke="#9a7418" stroke-width="1.500"/></svg>
<span class="t" style="left:56px;top:488px;font-size:12px;line-height:12px;">附录<span class=a>D</span> 工程档案案卷封面、目录、备考表、脊背</span>
<div style="left:11px;top:512px;width:6px;height:1px;background:repeating-linear-gradient(90deg,#a8a8a8 0 1px,transparent 1px 2px)"></div>
<div style="left:2px;top:508px;width:9px;height:9px;background:#fff;border:1px solid #9a9a9a"></div>
<div style="left:4px;top:512px;width:5px;height:1px;background:#000"></div>
<div style="left:6px;top:510px;width:1px;height:5px;background:#000"></div>
<svg style="left:16px;top:506px" width="16" height="14" viewBox="0 0 16 14"><path d="M.5 3q0-2 2-2h3.500l1.500 2h6.500q1.500 0 1.500 1.500v7.500q0 1.500-1.500 1.500h-12q-1.500 0-1.500-1.500z" fill="#f8dc78" stroke="#c89a28"/><path d="M1 5.500h14v6.500q0 1-1 1h-12q-1 0-1-1z" fill="#fbe89a"/><path d="M1 12.700h14.500" stroke="#9a7418" stroke-width="1.500"/></svg>
<span class="t" style="left:37px;top:506px;font-size:12px;line-height:12px;">工程验收及备案</span>
<div style="left:11px;top:530px;width:6px;height:1px;background:repeating-linear-gradient(90deg,#a8a8a8 0 1px,transparent 1px 2px)"></div>
<div style="left:2px;top:526px;width:9px;height:9px;background:#fff;border:1px solid #9a9a9a"></div>
<div style="left:4px;top:530px;width:5px;height:1px;background:#000"></div>
<div style="left:6px;top:528px;width:1px;height:5px;background:#000"></div>
<svg style="left:16px;top:524px" width="16" height="14" viewBox="0 0 16 14"><path d="M.5 3q0-2 2-2h3.500l1.500 2h6.500q1.500 0 1.500 1.500v7.500q0 1.500-1.500 1.500h-12q-1.500 0-1.500-1.500z" fill="#f8dc78" stroke="#c89a28"/><path d="M1 5.500h14v6.500q0 1-1 1h-12q-1 0-1-1z" fill="#fbe89a"/><path d="M1 12.700h14.500" stroke="#9a7418" stroke-width="1.500"/></svg>
<span class="t" style="left:37px;top:524px;font-size:12px;line-height:12px;">南宁市单位<span class=a>(</span>子单位<span class=a>)</span>工程质量验收资料</span>
<div style="left:11px;top:548px;width:6px;height:1px;background:repeating-linear-gradient(90deg,#a8a8a8 0 1px,transparent 1px 2px)"></div>
<div style="left:2px;top:544px;width:9px;height:9px;background:#fff;border:1px solid #9a9a9a"></div>
<div style="left:4px;top:548px;width:5px;height:1px;background:#000"></div>
<div style="left:6px;top:546px;width:1px;height:5px;background:#000"></div>
<svg style="left:16px;top:542px" width="16" height="14" viewBox="0 0 16 14"><path d="M.5 3q0-2 2-2h3.500l1.500 2h6.500q1.500 0 1.500 1.500v7.500q0 1.500-1.500 1.500h-12q-1.500 0-1.500-1.500z" fill="#f8dc78" stroke="#c89a28"/><path d="M1 5.500h14v6.500q0 1-1 1h-12q-1 0-1-1z" fill="#fbe89a"/><path d="M1 12.700h14.500" stroke="#9a7418" stroke-width="1.500"/></svg>
<span class="t" style="left:37px;top:542px;font-size:12px;line-height:12px;">消防工程资料</span>
<div style="left:11px;top:566px;width:6px;height:1px;background:repeating-linear-gradient(90deg,#a8a8a8 0 1px,transparent 1px 2px)"></div>
<div style="left:2px;top:562px;width:9px;height:9px;background:#fff;border:1px solid #9a9a9a"></div>
<div style="left:4px;top:566px;width:5px;height:1px;background:#000"></div>
<div style="left:6px;top:564px;width:1px;height:5px;background:#000"></div>
<svg style="left:16px;top:560px" width="16" height="14" viewBox="0 0 16 14"><path d="M.5 3q0-2 2-2h3.500l1.500 2h6.500q1.500 0 1.500 1.500v7.500q0 1.500-1.500 1.500h-12q-1.500 0-1.500-1.500z" fill="#f8dc78" stroke="#c89a28"/><path d="M1 5.500h14v6.500q0 1-1 1h-12q-1 0-1-1z" fill="#fbe89a"/><path d="M1 12.700h14.500" stroke="#9a7418" stroke-width="1.500"/></svg>
<span class="t" style="left:37px;top:560px;font-size:12px;line-height:12px;">无障碍设施施工验收及维护规范（<span class=a>GB50642-2011</span>）</span>
<div style="left:11px;top:584px;width:6px;height:1px;background:repeating-linear-gradient(90deg,#a8a8a8 0 1px,transparent 1px 2px)"></div>
<div style="left:2px;top:580px;width:9px;height:9px;background:#fff;border:1px solid #9a9a9a"></div>
<div style="left:4px;top:584px;width:5px;height:1px;background:#000"></div>
<svg style="left:16px;top:577px" width="17" height="15" viewBox="0 0 17 15"><path d="M.500 3.500q0-2 2-2h3l1.500 2h6q1.500 0 1.500 1.500v8.500h-14z" fill="#f4d060" stroke="#c89a28"/><path d="M1 13.500l2.500-7h13l-3 7.500h-12z" fill="#fce8a0" stroke="#c89a28"/><path d="M4 4.500h8" stroke="#fff"/></svg>
<span class="t" style="left:37px;top:578px;font-size:12px;line-height:12px;">广西建筑节能工程用表</span>
<div style="left:30px;top:602px;width:6px;height:1px;background:repeating-linear-gradient(90deg,#a8a8a8 0 1px,transparent 1px 2px)"></div>
<div style="left:21px;top:598px;width:9px;height:9px;background:#fff;border:1px solid #9a9a9a"></div>
<div style="left:23px;top:602px;width:5px;height:1px;background:#000"></div>
<div style="left:25px;top:600px;width:1px;height:5px;background:#000"></div>
<svg style="left:35px;top:596px" width="16" height="14" viewBox="0 0 16 14"><path d="M.5 3q0-2 2-2h3.500l1.500 2h6.500q1.500 0 1.500 1.500v7.500q0 1.500-1.500 1.500h-12q-1.500 0-1.500-1.500z" fill="#f8dc78" stroke="#c89a28"/><path d="M1 5.500h14v6.500q0 1-1 1h-12q-1 0-1-1z" fill="#fbe89a"/><path d="M1 12.700h14.500" stroke="#9a7418" stroke-width="1.500"/></svg>
<span class="t" style="left:56px;top:596px;font-size:12px;line-height:12px;">节能分部广西配套表格</span>
<div style="left:30px;top:620px;width:6px;height:1px;background:repeating-linear-gradient(90deg,#a8a8a8 0 1px,transparent 1px 2px)"></div>
<div style="left:21px;top:616px;width:9px;height:9px;background:#fff;border:1px solid #9a9a9a"></div>
<div style="left:23px;top:620px;width:5px;height:1px;background:#000"></div>
<div style="left:25px;top:618px;width:1px;height:5px;background:#000"></div>
<svg style="left:35px;top:614px" width="16" height="14" viewBox="0 0 16 14"><path d="M.5 3q0-2 2-2h3.500l1.500 2h6.500q1.500 0 1.500 1.500v7.500q0 1.500-1.500 1.500h-12q-1.500 0-1.500-1.500z" fill="#f8dc78" stroke="#c89a28"/><path d="M1 5.500h14v6.500q0 1-1 1h-12q-1 0-1-1z" fill="#fbe89a"/><path d="M1 12.700h14.500" stroke="#9a7418" stroke-width="1.500"/></svg>
<span class="t" style="left:56px;top:614px;font-size:12px;line-height:12px;">节能分部工程资料（南宁）</span>
<div style="left:30px;top:638px;width:6px;height:1px;background:repeating-linear-gradient(90deg,#a8a8a8 0 1px,transparent 1px 2px)"></div>
<div style="left:21px;top:634px;width:9px;height:9px;background:#fff;border:1px solid #9a9a9a"></div>
<div style="left:23px;top:638px;width:5px;height:1px;background:#000"></div>
<svg style="left:35px;top:631px" width="17" height="15" viewBox="0 0 17 15"><path d="M.500 3.500q0-2 2-2h3l1.500 2h6q1.500 0 1.500 1.500v8.500h-14z" fill="#f4d060" stroke="#c89a28"/><path d="M1 13.500l2.500-7h13l-3 7.500h-12z" fill="#fce8a0" stroke="#c89a28"/><path d="M4 4.500h8" stroke="#fff"/></svg>
<span class="t" style="left:56px;top:632px;font-size:12px;line-height:12px;">建筑节能参考表</span>
<div style="left:49px;top:656px;width:6px;height:1px;background:repeating-linear-gradient(90deg,#a8a8a8 0 1px,transparent 1px 2px)"></div>
<div style="left:40px;top:652px;width:9px;height:9px;background:#fff;border:1px solid #9a9a9a"></div>
<div style="left:42px;top:656px;width:5px;height:1px;background:#000"></div>
<div style="left:44px;top:654px;width:1px;height:5px;background:#000"></div>
<svg style="left:54px;top:650px" width="16" height="14" viewBox="0 0 16 14"><path d="M.5 3q0-2 2-2h3.500l1.500 2h6.500q1.500 0 1.500 1.500v7.500q0 1.500-1.500 1.500h-12q-1.500 0-1.500-1.500z" fill="#f8dc78" stroke="#c89a28"/><path d="M1 5.500h14v6.500q0 1-1 1h-12q-1 0-1-1z" fill="#fbe89a"/><path d="M1 12.700h14.500" stroke="#9a7418" stroke-width="1.500"/></svg>
<span class="t" style="left:75px;top:650px;font-size:12px;line-height:12px;"><span class=a>A</span>册：施工组织设计、质量计划资料</span>
<div style="left:49px;top:674px;width:6px;height:1px;background:repeating-linear-gradient(90deg,#a8a8a8 0 1px,transparent 1px 2px)"></div>
<div style="left:40px;top:670px;width:9px;height:9px;background:#fff;border:1px solid #9a9a9a"></div>
<div style="left:42px;top:674px;width:5px;height:1px;background:#000"></div>
<svg style="left:54px;top:667px" width="17" height="15" viewBox="0 0 17 15"><path d="M.500 3.500q0-2 2-2h3l1.500 2h6q1.500 0 1.500 1.500v8.500h-14z" fill="#f4d060" stroke="#c89a28"/><path d="M1 13.500l2.500-7h13l-3 7.500h-12z" fill="#fce8a0" stroke="#c89a28"/><path d="M4 4.500h8" stroke="#fff"/></svg>
<span class="t" style="left:75px;top:668px;font-size:12px;line-height:12px;"><span class=a>B</span>册：施工技术管理资料</span>
<div style="left:64px;top:692px;width:10px;height:1px;background:repeating-linear-gradient(90deg,#a8a8a8 0 1px,transparent 1px 2px)"></div>
<svg style="left:74px;top:686px" width="14" height="14" viewBox="0 0 14 14"><rect width="14" height="14" fill="#f80808"/><rect x="2" y="2" width="10" height="10" fill="#fff"/><path d="M2 3h3.700l1.500 1.100 1.500-1.100h2.500v1.700l-1.900 1.900h1.700v1.100h1v2h-1.200v1h-3.600l-.300-.700h-4.900v-.600l1.200-.300 1.300-2.600-1.500-2.300h-1z" fill="#f80808"/><path d="M6.500 7.400l2.200 2.700" stroke="#fff" stroke-width=".700" stroke-dasharray=".700 .600"/></svg>
<span class="t" style="left:94px;top:686px;font-size:12px;line-height:12px;"><span class=a>B-0_</span>目录</span>
<div style="left:64px;top:710px;width:10px;height:1px;background:repeating-linear-gradient(90deg,#a8a8a8 0 1px,transparent 1px 2px)"></div>
<svg style="left:74px;top:704px" width="14" height="14" viewBox="0 0 14 14"><rect width="14" height="14" fill="#f80808"/><rect x="2" y="2" width="10" height="10" fill="#fff"/><path d="M2 3h3.700l1.500 1.100 1.500-1.100h2.500v1.700l-1.900 1.900h1.700v1.100h1v2h-1.200v1h-3.600l-.300-.700h-4.900v-.600l1.200-.300 1.300-2.600-1.500-2.300h-1z" fill="#f80808"/><path d="M6.500 7.400l2.200 2.700" stroke="#fff" stroke-width=".700" stroke-dasharray=".700 .600"/></svg>
<span class="t" style="left:94px;top:704px;font-size:12px;line-height:12px;">建筑工程施工图审查通过证书</span>
<div style="left:64px;top:728px;width:10px;height:1px;background:repeating-linear-gradient(90deg,#a8a8a8 0 1px,transparent 1px 2px)"></div>
<svg style="left:74px;top:722px" width="14" height="14" viewBox="0 0 14 14"><rect width="14" height="14" fill="#f80808"/><rect x="2" y="2" width="10" height="10" fill="#fff"/><path d="M2 3h3.700l1.500 1.100 1.500-1.100h2.500v1.700l-1.900 1.900h1.700v1.100h1v2h-1.200v1h-3.600l-.300-.700h-4.900v-.600l1.200-.300 1.300-2.600-1.500-2.300h-1z" fill="#f80808"/><path d="M6.500 7.400l2.200 2.700" stroke="#fff" stroke-width=".700" stroke-dasharray=".700 .600"/></svg>
<span class="t" style="left:94px;top:722px;font-size:12px;line-height:12px;">建筑工程施工图审查通过项目表</span>
<div style="left:64px;top:746px;width:10px;height:1px;background:repeating-linear-gradient(90deg,#a8a8a8 0 1px,transparent 1px 2px)"></div>
<svg style="left:74px;top:740px" width="14" height="14" viewBox="0 0 14 14"><rect width="14" height="14" fill="#f80808"/><rect x="2" y="2" width="10" height="10" fill="#fff"/><path d="M2 3h3.700l1.500 1.100 1.500-1.100h2.500v1.700l-1.900 1.900h1.700v1.100h1v2h-1.200v1h-3.600l-.300-.700h-4.900v-.600l1.200-.300 1.300-2.600-1.500-2.300h-1z" fill="#f80808"/><path d="M6.500 7.400l2.200 2.700" stroke="#fff" stroke-width=".700" stroke-dasharray=".700 .600"/></svg>
<span class="t" style="left:94px;top:740px;font-size:12px;line-height:12px;">建筑工程施工图审查备案证书</span>
<div style="left:64px;top:764px;width:10px;height:1px;background:repeating-linear-gradient(90deg,#a8a8a8 0 1px,transparent 1px 2px)"></div>
<svg style="left:74px;top:758px" width="14" height="14" viewBox="0 0 14 14"><rect width="14" height="14" fill="#f80808"/><rect x="2" y="2" width="10" height="10" fill="#fff"/><path d="M2 3h3.700l1.500 1.100 1.500-1.100h2.500v1.700l-1.900 1.900h1.700v1.100h1v2h-1.200v1h-3.600l-.300-.700h-4.900v-.600l1.200-.300 1.300-2.600-1.500-2.300h-1z" fill="#f80808"/><path d="M6.500 7.400l2.200 2.700" stroke="#fff" stroke-width=".700" stroke-dasharray=".700 .600"/></svg>
<span class="t" style="left:94px;top:758px;font-size:12px;line-height:12px;">建筑工程施工图审查备案项目表</span>
<div style="left:64px;top:782px;width:10px;height:1px;background:repeating-linear-gradient(90deg,#a8a8a8 0 1px,transparent 1px 2px)"></div>
<svg style="left:74px;top:776px" width="14" height="14" viewBox="0 0 14 14"><rect width="14" height="14" fill="#f80808"/><rect x="2" y="2" width="10" height="10" fill="#fff"/><path d="M2 3h3.700l1.500 1.100 1.500-1.100h2.500v1.700l-1.900 1.900h1.700v1.100h1v2h-1.200v1h-3.600l-.300-.700h-4.900v-.600l1.200-.300 1.300-2.600-1.500-2.300h-1z" fill="#f80808"/><path d="M6.500 7.400l2.200 2.700" stroke="#fff" stroke-width=".700" stroke-dasharray=".700 .600"/></svg>
<span class="t" style="left:94px;top:776px;font-size:12px;line-height:12px;"><span class=a>B-1-1</span>民用建筑节能设计审查备案登记表</span>
<div style="left:68px;top:800px;width:6px;height:1px;background:repeating-linear-gradient(90deg,#a8a8a8 0 1px,transparent 1px 2px)"></div>
<div style="left:59px;top:796px;width:9px;height:9px;background:#fff;border:1px solid #9a9a9a"></div>
<div style="left:61px;top:800px;width:5px;height:1px;background:#000"></div>
<svg style="left:74px;top:794px" width="14" height="14" viewBox="0 0 14 14"><rect width="14" height="14" fill="#f80808"/><rect x="2" y="2" width="10" height="10" fill="#fff"/><path d="M2 3h3.700l1.500 1.100 1.500-1.100h2.500v1.700l-1.900 1.900h1.700v1.100h1v2h-1.200v1h-3.600l-.300-.700h-4.900v-.600l1.200-.300 1.300-2.600-1.500-2.300h-1z" fill="#f80808"/><path d="M6.500 7.400l2.200 2.700" stroke="#fff" stroke-width=".700" stroke-dasharray=".700 .600"/></svg>
<span class="t" style="left:94px;top:794px;font-size:12px;line-height:12px;"><span class=a>B-1-2</span>民用建筑节能审查备案登记表<span class=a>(</span>公共建筑部分<span class=a>)</span></span>
<div style="left:83px;top:818px;width:10px;height:1px;background:repeating-linear-gradient(90deg,#a8a8a8 0 1px,transparent 1px 2px)"></div>
<svg style="left:93px;top:812px" width="14" height="14" viewBox="0 0 14 14"><rect width="14" height="14" fill="#0a6a18"/><rect x="2" y="2" width="10" height="10" fill="#fff"/><path d="M2 3h3.700l1.500 1.100 1.500-1.100h2.500v1.700l-1.900 1.900h1.700v1.100h1v2h-1.200v1h-3.600l-.300-.700h-4.900v-.600l1.200-.300 1.300-2.600-1.500-2.300h-1z" fill="#0a6a18"/><path d="M6.500 7.400l2.200 2.700" stroke="#fff" stroke-width=".700" stroke-dasharray=".700 .600"/></svg>
<div style="left:111px;top:810px;width:279px;height:17px;background:#a2a2a2;border:1px solid #8a8a8a"></div>
<span class="t" style="left:113px;top:812px;font-size:12px;line-height:12px;"><span class=a>001-B-1-2</span>民用建筑节能审查备案登记表<span class=a>(</span>公共建筑部</span>
<div style="left:64px;top:836px;width:10px;height:1px;background:repeating-linear-gradient(90deg,#a8a8a8 0 1px,transparent 1px 2px)"></div>
<svg style="left:74px;top:830px" width="14" height="14" viewBox="0 0 14 14"><rect width="14" height="14" fill="#f80808"/><rect x="2" y="2" width="10" height="10" fill="#fff"/><path d="M2 3h3.700l1.500 1.100 1.500-1.100h2.500v1.700l-1.900 1.900h1.700v1.100h1v2h-1.200v1h-3.600l-.300-.700h-4.900v-.600l1.200-.300 1.300-2.600-1.500-2.300h-1z" fill="#f80808"/><path d="M6.500 7.400l2.200 2.700" stroke="#fff" stroke-width=".700" stroke-dasharray=".700 .600"/></svg>
<span class="t" style="left:94px;top:830px;font-size:12px;line-height:12px;"><span class=a>B-2_</span>建设工程质量人员从业资格审查表</span>
<div style="left:391px;top:126px;width:17px;height:720px;background:repeating-conic-gradient(#fff 0 25%,#ececec 0 50%) 0 0/2px 2px"></div>
<div style="left:391px;top:126px;width:17px;height:17px;background:#f0f0f0;border:1px solid #fff;border-right-color:#696969;border-bottom-color:#696969;box-shadow:inset -1px -1px #a0a0a0"></div>
<svg style="left:395px;top:132px" width="8" height="5" viewBox="0 0 8 5"><path d="M0 4.500h8l-4-4.500z" fill="#000"/></svg>
<div style="left:391px;top:444px;width:17px;height:234px;background:#f0f0f0;border:1px solid #fff;border-right-color:#696969;border-bottom-color:#696969;box-shadow:inset -1px -1px #a0a0a0"></div>
<div style="left:391px;top:829px;width:17px;height:17px;background:#f0f0f0;border:1px solid #fff;border-right-color:#696969;border-bottom-color:#696969;box-shadow:inset -1px -1px #a0a0a0"></div>
<svg style="left:395px;top:835px" width="8" height="5" viewBox="0 0 8 5"><path d="M0 0h8l-4 4.500z" fill="#000"/></svg>
<div style="left:0px;top:846px;width:409px;height:8px;background:#fff"></div>
<div style="left:122px;top:846px;width:161px;height:8px;background:linear-gradient(#fff 0 35%,#c4d8e6 65%,#86a4bc 100%);border:1px solid #b8b8b8;border-radius:4px"></div>
<svg style="left:199px;top:848px" width="8" height="5" viewBox="0 0 8 5"><path d="M.500 .500l3.500 3.500 3.500-3.500" stroke="#000" stroke-width="1.500" fill="none"/></svg>
<div style="left:0px;top:854px;width:409px;height:1px;background:#8a94a6"></div>
<div style="left:0px;top:855px;width:408px;height:15px;background:linear-gradient(#fff 0,#fff 30%,#ececf0 100%)"></div>
<span class="t" style="left:166px;top:857px;font-size:12px;line-height:12px;">范</span>
<span class="t" style="left:226px;top:857px;font-size:12px;line-height:12px;">例</span>
<div style="left:0px;top:870px;width:408px;height:110px;background:#fff"></div>
<div style="left:0px;top:980px;width:410px;height:1px;background:#8a94a6"></div>
<div style="left:0px;top:981px;width:410px;height:2px;background:#fff"></div>
<div style="left:0px;top:983px;width:414px;height:1px;background:#c8c8c8"></div>
<div style="left:434px;top:55px;width:2px;height:17px;background:#fff"></div>
<div style="left:436px;top:55px;width:1px;height:17px;background:#a0a0a0"></div>
<div style="left:434px;top:72px;width:3px;height:1px;background:#a0a0a0"></div>
<svg style="left:446px;top:56px" width="16" height="16" viewBox="0 0 16 16"><path d="M.500 1.500h6l2 2v7.500h-8z" fill="#fff" stroke="#000"/><path d="M2 4.500h4M2 6.500h4M2 8.500h4" stroke="#000"/><path d="M6.500 5.500h5.500l3 3v7h-8.500z" fill="#fff" stroke="#0000a0" stroke-width="1.300"/><path d="M8.500 9.500h5M8.500 11.500h5M8.500 13.500h5" stroke="#000"/></svg>
<svg style="left:472.5px;top:56px" width="16" height="16" viewBox="0 0 16 16"><path d="M5.500 0l4.500 10M10.500 0l-4.500 10" stroke="#000" stroke-width="1.400"/><circle cx="5" cy="12.500" r="2.200" fill="none" stroke="#0000c0" stroke-width="1.400"/><circle cx="11" cy="12.500" r="2.200" fill="none" stroke="#0000c0" stroke-width="1.400"/></svg>
<svg style="left:498px;top:56px" width="16" height="16" viewBox="0 0 16 16"><rect x=".500" y="2.500" width="12" height="12" rx="1" fill="#8c6840" stroke="#000"/><rect x="3.500" y=".800" width="6" height="3.500" fill="#e8d060" stroke="#000"/><path d="M6.500 8.500h8v7h-8z" fill="#fff" stroke="#0000a0" stroke-width="1.300"/><path d="M8 11h5M8 13h5" stroke="#000"/></svg>
<div style="left:520px;top:55px;width:1px;height:18px;background:#a6a6a6"></div>
<div style="left:521px;top:55px;width:1px;height:18px;background:#fbfbfb"></div>
<svg style="left:527px;top:56px" width="16" height="16" viewBox="0 0 16 16"><path d="M3 7.500q4-5 8-2.500 3.500 3-.500 7" fill="none" stroke="#1038c0" stroke-width="1.800"/><path d="M1 4l.500 7 6.500-2.500z" fill="#1038c0"/></svg>
<svg style="left:553px;top:56px" width="16" height="16" viewBox="0 0 16 16"><path d="M13 7.500q-4-5-8-2.500-3.500 3 .500 7" fill="none" stroke="#b8b8b8" stroke-width="1.800"/><path d="M15 4l-.500 7-6.500-2.500z" fill="#b8b8b8"/></svg>
<div style="left:574px;top:55px;width:1px;height:18px;background:#a6a6a6"></div>
<div style="left:575px;top:55px;width:1px;height:18px;background:#fbfbfb"></div>
<div style="left:578px;top:56px;width:90px;height:17px;background:#fff;border:1px solid #a4a4a4"></div>
<span class="t" style="left:582px;top:57px;font-size:14px;line-height:14px;font-family:'Liberation Serif',serif;font-weight:bold">T</span>
<span class="t" style="left:588px;top:61px;font-size:10px;line-height:10px;font-family:'Liberation Serif',serif;font-weight:bold">T</span>
<span class="t" style="left:598px;top:58px;font-size:12px;line-height:12px;">宋体</span>
<div style="left:652px;top:57px;width:15px;height:15px;background:#f0f0f0"></div>
<svg style="left:655.5px;top:62px" width="9" height="5" viewBox="0 0 9 5"><path d="M0 0h9 l-4.5 5z" fill="#000"/></svg>
<div style="left:674px;top:56px;width:59px;height:17px;background:#fff;border:1px solid #a4a4a4"></div>
<span class="t" style="left:677px;top:59px;font-size:11px;line-height:11px;"><span class=a>10</span></span>
<div style="left:716px;top:57px;width:16px;height:15px;background:#f0f0f0"></div>
<svg style="left:719px;top:62px" width="9" height="5" viewBox="0 0 9 5"><path d="M0 0h9 l-4.5 5z" fill="#000"/></svg>
<svg style="left:738.5px;top:55.5px" width="17" height="17" viewBox="0 0 17 17"><path d="M0 9l6-7 3 8-4 6z" fill="#2040c0"/><path d="M7 1h7v7h-7z" fill="#b0a060" stroke="#604000"/><path d="M5 8l8-2 3 4-4 6-6-2z" fill="#e0b020" stroke="#703000" stroke-width=".600"/><circle cx="12.500" cy="12" r="3" fill="#e8e8f0" stroke="#888"/><path d="M0 10q3 6 8 5" stroke="#1028a0" stroke-width="2" fill="none"/></svg>
<span class="t" style="left:768px;top:57px;font-size:14px;line-height:14px;font-family:'Liberation Serif',serif;font-weight:bold">B</span>
<svg style="left:790px;top:56px" width="16" height="16" viewBox="0 0 16 16"><path d="M3 12l2 .500 8-9.500h-3z" fill="#000"/><path d="M1 13.500h5" stroke="#000"/></svg>
<span class="t" style="left:819px;top:57px;font-size:14px;line-height:14px;font-family:'Liberation Serif',serif;font-weight:bold;text-decoration:underline">U</span>
<svg style="left:843px;top:55.5px" width="16" height="17" viewBox="0 0 16 17"><path d="M4 7l5-5 5 5.500-5 5z" fill="#fff" stroke="#000" stroke-width="1.200"/><path d="M6 2.500q0-2.500 2-2t1 3" fill="none" stroke="#000"/><path d="M2.500 8.500q-2 3.500 0 4 2-.500 0-4z" fill="#2850c0"/><path d="M6 8h7l-4 4z" fill="#406080"/><rect x="1" y="14" width="14" height="2.500" fill="#b8b8b8"/></svg>
<span class="t" style="left:872px;top:56px;font-size:13px;line-height:13px;font-family:'Liberation Serif',serif;font-weight:bold">A</span>
<div style="left:871px;top:68px;width:12px;height:2px;background:#e00000"></div>
<div style="left:891px;top:55px;width:1px;height:18px;background:#a6a6a6"></div>
<div style="left:892px;top:55px;width:1px;height:18px;background:#fbfbfb"></div>
<svg style="left:898px;top:56px" width="16" height="16" viewBox="0 0 16 16"><path d="M8 2v12M2 8h12" stroke="#000" stroke-width="2"/></svg>
<svg style="left:924px;top:56px" width="16" height="16" viewBox="0 0 16 16"><path d="M2.500 8h11" stroke="#000" stroke-width="2"/></svg>
<div style="left:947px;top:55px;width:1px;height:18px;background:#a6a6a6"></div>
<div style="left:948px;top:55px;width:1px;height:18px;background:#fbfbfb"></div>
<span class="t" style="left:960px;top:57px;font-size:14px;line-height:14px;font-family:'Liberation Serif',serif;font-style:italic;color:#a06000">b</span>
<span class="t" style="left:968px;top:57px;font-size:8px;line-height:8px;color:#203080">2</span>
<div style="left:981px;top:55px;width:1px;height:18px;background:#a6a6a6"></div>
<div style="left:982px;top:55px;width:1px;height:18px;background:#fbfbfb"></div>
<svg style="left:991px;top:55px" width="18" height="18" viewBox="0 0 18 18"><circle cx="9" cy="9" r="7.500" fill="none" stroke="#000" stroke-width="1.100"/><path d="M5.500 5v8M4 6.500l1.500-1.500M7.500 13l3-8" stroke="#000" stroke-width="1"/><circle cx="12" cy="11" r="1.800" fill="none" stroke="#000"/><path d="M14 8.800v4.400" stroke="#000"/></svg>
<div style="left:1016px;top:55px;width:1px;height:18px;background:#a6a6a6"></div>
<div style="left:1017px;top:55px;width:1px;height:18px;background:#fbfbfb"></div>
<div style="left:1020px;top:53px;width:25px;height:21px;background:#f6f6f6;border:1px solid #a8a8a8;border-right-color:#fff;border-bottom-color:#fff"></div>
<svg style="left:1025.5px;top:56px" width="16" height="16" viewBox="0 0 16 16"><rect x="1.500" y="1.500" width="13" height="13" fill="#fff" stroke="#000" stroke-width="1.300"/><path d="M3.500 5h9M3.500 8h9" stroke="#000" stroke-width="1.400"/><path d="M3.500 11.500h5M8.500 9.500v4" stroke="#000" stroke-width="1.300"/></svg>
<svg style="left:1050.5px;top:56px" width="16" height="16" viewBox="0 0 16 16"><path d="M1 2.5h14" stroke="#000" stroke-width="1.300"/><path d="M1 5.3h10" stroke="#000" stroke-width="1.300"/><path d="M1 8.1h14" stroke="#000" stroke-width="1.300"/><path d="M1 10.9h10" stroke="#000" stroke-width="1.300"/><path d="M1 13.7h13" stroke="#000" stroke-width="1.300"/></svg>
<div style="left:1072px;top:53px;width:25px;height:21px;background:#f6f6f6;border:1px solid #a8a8a8;border-right-color:#fff;border-bottom-color:#fff"></div>
<svg style="left:1077px;top:56px" width="16" height="16" viewBox="0 0 16 16"><path d="M1 2.5h14" stroke="#000" stroke-width="1.300"/><path d="M3 5.3h10" stroke="#000" stroke-width="1.300"/><path d="M1 8.1h14" stroke="#000" stroke-width="1.300"/><path d="M3 10.9h10" stroke="#000" stroke-width="1.300"/><path d="M2 13.7h12" stroke="#000" stroke-width="1.300"/></svg>
<svg style="left:1103px;top:56px" width="16" height="16" viewBox="0 0 16 16"><path d="M1 2.5h14" stroke="#000" stroke-width="1.300"/><path d="M4 5.3h11" stroke="#000" stroke-width="1.300"/><path d="M1 8.1h14" stroke="#000" stroke-width="1.300"/><path d="M4 10.9h11" stroke="#000" stroke-width="1.300"/><path d="M2 13.7h13" stroke="#000" stroke-width="1.300"/></svg>
<svg style="left:1128.5px;top:56px" width="16" height="16" viewBox="0 0 16 16"><path d="M1 2.500h14M1 13.500h14M1 5.500h5M10 5.500h5M1 8h14M1 10.500h5M10 10.500h5" stroke="#000" stroke-width="1.300"/></svg>
<div style="left:1153px;top:55px;width:1px;height:18px;background:#a6a6a6"></div>
<div style="left:1154px;top:55px;width:1px;height:18px;background:#fbfbfb"></div>
<svg style="left:1163px;top:56px" width="16" height="16" viewBox="0 0 16 16"><path d="M2 1v12" stroke="#000" stroke-width="1.300"/><path d="M4.8 1v10" stroke="#000" stroke-width="1.300"/><path d="M7.6 1v12" stroke="#000" stroke-width="1.300"/><path d="M10.4 1v10" stroke="#000" stroke-width="1.300"/><path d="M13.2 1v12" stroke="#000" stroke-width="1.300"/></svg>
<div style="left:1184px;top:53px;width:25px;height:21px;background:#f6f6f6;border:1px solid #a8a8a8;border-right-color:#fff;border-bottom-color:#fff"></div>
<svg style="left:1189px;top:56px" width="16" height="16" viewBox="0 0 16 16"><path d="M2 1v14" stroke="#000" stroke-width="1.300"/><path d="M4.8 4v8" stroke="#000" stroke-width="1.300"/><path d="M7.6 1v14" stroke="#000" stroke-width="1.300"/><path d="M10.4 4v8" stroke="#000" stroke-width="1.300"/><path d="M13.2 2v12" stroke="#000" stroke-width="1.300"/></svg>
<svg style="left:1215.5px;top:56px" width="16" height="16" viewBox="0 0 16 16"><path d="M2 2v12" stroke="#000" stroke-width="1.300"/><path d="M4.8 5v9" stroke="#000" stroke-width="1.300"/><path d="M7.6 2v12" stroke="#000" stroke-width="1.300"/><path d="M10.4 5v9" stroke="#000" stroke-width="1.300"/><path d="M13.2 2v12" stroke="#000" stroke-width="1.300"/></svg>
<div style="left:434px;top:79px;width:2px;height:17px;background:#fff"></div>
<div style="left:436px;top:79px;width:1px;height:17px;background:#a0a0a0"></div>
<div style="left:434px;top:96px;width:3px;height:1px;background:#a0a0a0"></div>
<svg style="left:444px;top:80px" width="17" height="16" viewBox="0 0 17 16"><rect x="0.6" y="1" width="7" height="4" fill="#f8f000" stroke="#000" stroke-width="1.200"/><rect x="0.6" y="11" width="7" height="4" fill="#f8f000" stroke="#000" stroke-width="1.200"/><path d="M16 6h-4v4h4" fill="none" stroke="#000" stroke-width="1.300"/><path d="M11 8h-4" stroke="#0000c0" stroke-width="1.400"/><path d="M6 8l3.500-3v6z" fill="#0000c0"/></svg>
<svg style="left:469px;top:80px" width="16" height="16" viewBox="0 0 16 16"><rect x=".600" y="1" width="14" height="8" fill="#fff" stroke="#000" stroke-width="1.300"/><rect x="5" y="2" width="9" height="6" fill="#f8f000"/><path d="M.600 5h14M5 1v8" stroke="#000" stroke-width="1.200"/><path d="M6 15v-4h3v4" fill="none" stroke="#000" stroke-width="1.200"/><path d="M7.500 11v-4" stroke="#c00000"/></svg>
<div style="left:495px;top:80px;width:17px;height:16px;background:#c8c8c8"></div>
<svg style="left:494px;top:80px" width="17" height="16" viewBox="0 0 17 16"><rect x="0.6" y="1" width="8" height="4" fill="#f8f000" stroke="#000" stroke-width="1.200"/><rect x="0.6" y="11" width="8" height="4" fill="#f8f000" stroke="#000" stroke-width="1.200"/><rect x=".600" y="6" width="10" height="4" fill="#e8e8e8" stroke="#fff"/><path d="M10 8h4" stroke="#0000c0" stroke-width="1.400"/><path d="M16.500 8l-3.500-3v6z" fill="#0000c0"/></svg>
<svg style="left:519.5px;top:80px" width="16" height="16" viewBox="0 0 16 16"><rect x="1" y="0.6" width="4" height="4" fill="#f8f000" stroke="#000" stroke-width="1.200"/><rect x="10" y="0.6" width="4" height="4" fill="#f8f000" stroke="#000" stroke-width="1.200"/><path d="M5.500 15v-4.500h4.500v4.500" fill="none" stroke="#000" stroke-width="1.300"/><path d="M7.700 10v-5" stroke="#0000c0" stroke-width="1.400"/><path d="M7.700 3l-3 3.500h6z" fill="#0000c0"/></svg>
<svg style="left:544px;top:80px" width="17" height="16" viewBox="0 0 17 16"><rect x=".700" y="1" width="8" height="13" fill="#fff" stroke="#000" stroke-width="1.400"/><rect x="1.500" y="6" width="3" height="7" fill="#f8f000"/><path d="M4.500 1v13M.700 5.500h8" stroke="#000" stroke-width="1.200"/><path d="M16 6h-6M16 10h-6" stroke="#000" stroke-width="1.300"/><path d="M7 8l3-2.500v5z" fill="#c00020"/></svg>
<svg style="left:569.5px;top:79.5px" width="16" height="17" viewBox="0 0 16 17"><rect x="1" y="0.6" width="4" height="4" fill="#f8f000" stroke="#000" stroke-width="1.200"/><rect x="10" y="0.6" width="4" height="4" fill="#f8f000" stroke="#000" stroke-width="1.200"/><path d="M3 5q0 4 4.500 4.500M12 5q0 4-4.500 4.500" fill="none" stroke="#000" stroke-width="1.300"/><path d="M7.500 8v5" stroke="#0000c0" stroke-width="1.400"/><path d="M7.500 16l-3-3.500h6z" fill="#0000c0"/></svg>
<svg style="left:596px;top:80px" width="15" height="16" viewBox="0 0 15 16"><rect x=".500" y="1" width="10" height="5" fill="#d4d4d4" stroke="#b0b0b0"/><rect x=".500" y="10" width="10" height="5" fill="#d4d4d4" stroke="#b0b0b0"/><path d="M12.500 4v9h-2" fill="none" stroke="#b8b8b8" stroke-width="1.300"/></svg>
<svg style="left:620.5px;top:80px" width="16" height="16" viewBox="0 0 16 16"><rect x=".700" y="1" width="10.500" height="4.500" fill="#f8f000" stroke="#000" stroke-width="1.400"/><rect x=".700" y="8.500" width="10.500" height="6" fill="#fff" stroke="#000" stroke-width="1.400"/><path d="M4 8.500v6M7.700 8.500v6M.700 11.500h10.500" stroke="#000" stroke-width="1.200"/><path d="M13.500 3v9h-2" fill="none" stroke="#000" stroke-width="1.300"/></svg>
<svg style="left:645.5px;top:80px" width="15" height="16" viewBox="0 0 15 16"><path d="M4.500 7v-3.500q0-2.500 3-2.500t3 2.500v3.500" fill="none" stroke="#000" stroke-width="1.600"/><rect x="1.700" y="7" width="11.600" height="7.500" fill="#f8f000" stroke="#000" stroke-width="1.400"/><rect x="6.300" y="9" width="2.400" height="3.500" fill="#0000a0"/></svg>
<div style="left:667px;top:79px;width:1px;height:18px;background:#a6a6a6"></div>
<div style="left:668px;top:79px;width:1px;height:18px;background:#fbfbfb"></div>
<svg style="left:673px;top:80px" width="16" height="16" viewBox="0 0 16 16"><path d="M3 3v10" stroke="#2060a0" stroke-width="1.200"/><path d="M3 0l-2.500 3.500h5zM3 16l-2.500-3.500h5z" fill="#2060a0"/><path d="M7.500 3.500h8M7.500 6.500h8M7.500 9.500h8M7.500 12.500h8" stroke="#000" stroke-width="1.200"/></svg>
<svg style="left:698px;top:80px" width="16" height="16" viewBox="0 0 16 16"><path d="M3 2v12" stroke="#b0b0b0" stroke-width="1.200"/><path d="M3 6l-2.500-3h5zM3 10l-2.500 3h5z" fill="#b0b0b0"/><path d="M7.500 3.500h8M7.500 6.500h8M7.500 9.500h8M7.500 12.500h8" stroke="#b0b0b0" stroke-width="1.200"/></svg>
<svg style="left:724px;top:80px" width="16" height="16" viewBox="0 0 16 16"><path d="M3 2l4 2 7 10-3 2-7-10z" fill="none" stroke="#c0c0c0" stroke-width="1.100"/><path d="M8 7l4 6" stroke="#c8c8c8" stroke-dasharray="1 1"/></svg>
<div style="left:746px;top:79px;width:1px;height:18px;background:#a6a6a6"></div>
<div style="left:747px;top:79px;width:1px;height:18px;background:#fbfbfb"></div>
<svg style="left:751.5px;top:79.5px" width="17" height="17" viewBox="0 0 17 17"><path d="M0 0l5 2.500-5 3z" fill="#000"/><rect x="4.500" y="4.500" width="11" height="11" fill="#f0dc90" stroke="#000" stroke-width="1.300"/><path d="M5 15l4-5 2.500 2.500 1.500-1.500 2.500 4z" fill="#404040"/><circle cx="12" cy="8" r="1.300" fill="#fff"/></svg>
<svg style="left:777px;top:86px" width="9" height="5" viewBox="0 0 9 5"><path d="M0 0h9 l-4.5 5z" fill="#000"/></svg>
<div style="left:791px;top:79px;width:1px;height:18px;background:#a6a6a6"></div>
<div style="left:792px;top:79px;width:1px;height:18px;background:#fbfbfb"></div>
<svg style="left:797.5px;top:79.5px" width="17" height="17" viewBox="0 0 17 17"><rect x="5" y="4.500" width="10.500" height="10.500" fill="#fff" stroke="#000" stroke-width="1.300"/><path d="M7 8h6.500M7 10.500h6.500M7 13h6.500M10 6v9" stroke="#000" stroke-width=".900"/><path d="M10 0l-8.500 8.500 4 .300-4.500 5.700 9-8-4-.500z" fill="#f8e820" stroke="#000" stroke-width=".800"/></svg>
<span class="t" style="left:825px;top:81px;font-size:16px;line-height:16px;font-family:'Liberation Serif',serif">Σ</span>
<svg style="left:847px;top:86px" width="9" height="5" viewBox="0 0 9 5"><path d="M0 0h9 l-4.5 5z" fill="#000"/></svg>
<div style="left:861px;top:79px;width:1px;height:18px;background:#a6a6a6"></div>
<div style="left:862px;top:79px;width:1px;height:18px;background:#fbfbfb"></div>
<div style="left:864px;top:80px;width:67px;height:17px;background:#fff;border:1px solid #a4a4a4"></div>
<span class="t" style="left:867px;top:83px;font-size:11px;line-height:11px;"><span class=a>100%</span></span>
<div style="left:914px;top:81px;width:16px;height:15px;background:#f0f0f0"></div>
<svg style="left:917px;top:86px" width="9" height="5" viewBox="0 0 9 5"><path d="M0 0h9 l-4.5 5z" fill="#000"/></svg>
<div style="left:933px;top:79px;width:1px;height:18px;background:#a6a6a6"></div>
<div style="left:934px;top:79px;width:1px;height:18px;background:#fbfbfb"></div>
<div style="left:937px;top:80px;width:80px;height:17px;background:#fff;border:1px solid #a4a4a4"></div>
<div style="left:941px;top:88px;width:54px;height:1px;background:#000"></div>
<div style="left:1000px;top:81px;width:16px;height:15px;background:#f0f0f0"></div>
<svg style="left:1002px;top:86px" width="9" height="5" viewBox="0 0 9 5"><path d="M0 0h9 l-4.5 5z" fill="#000"/></svg>
<svg style="left:1021.5px;top:80.5px" width="15" height="15" viewBox="0 0 15 15"><rect x="1" y="1" width="12.500" height="12.500" fill="#fff" stroke="#28a0e8" stroke-width="1.800"/><path d="M1.500 1.500l12 12" stroke="#101060" stroke-width="1.800"/></svg>
<svg style="left:1046.5px;top:86px" width="9" height="5" viewBox="0 0 9 5"><path d="M0 0h9 l-4.5 5z" fill="#000"/></svg>
<svg style="left:1063.5px;top:80.5px" width="15" height="15" viewBox="0 0 15 15"><rect x="1" y="1" width="12.500" height="12.500" fill="#e0e0e0" stroke="#28a0e8" stroke-width="1.800"/><path d="M2 2l11 11" stroke="#c8c8c8" stroke-width="1.300"/></svg>
<svg style="left:1087.5px;top:86px" width="9" height="5" viewBox="0 0 9 5"><path d="M0 0h9 l-4.5 5z" fill="#000"/></svg>
<div style="left:434px;top:105px;width:2px;height:17px;background:#fff"></div>
<div style="left:436px;top:105px;width:1px;height:17px;background:#a0a0a0"></div>
<div style="left:434px;top:122px;width:3px;height:1px;background:#a0a0a0"></div>
<span class="t" style="left:447px;top:106px;font-size:8px;line-height:8px;">1</span>
<span class="t" style="left:451px;top:109px;font-size:8px;line-height:8px;">2</span>
<span class="t" style="left:455px;top:113px;font-size:8px;line-height:8px;">3</span>
<span class="t" style="left:463.5px;top:108px;font-size:12px;line-height:12px;">随机数</span>
<svg style="left:523.5px;top:107px" width="12" height="14" viewBox="0 0 12 14"><path d="M6 0v13M3.500 13.500h5" stroke="#000" stroke-width="1.600"/><ellipse cx="6" cy="6.500" rx="4.500" ry="3" fill="none" stroke="#000" stroke-width="1.500"/></svg>
<span class="t" style="left:539.5px;top:108px;font-size:12px;line-height:12px;">特殊符号</span>
<svg style="left:597px;top:107px" width="15" height="14" viewBox="0 0 15 14"><text x="0" y="13" font-size="17" font-family="Liberation Sans" fill="#102828" textLength="14.500" lengthAdjust="spacingAndGlyphs">NO</text></svg>
<span class="t" style="left:614.5px;top:108px;font-size:12px;line-height:12px;">重新编号</span>
<svg style="left:670.5px;top:107.5px" width="15" height="13" viewBox="0 0 15 13"><path d="M4 1v11h3q5 0 5-5.500t-5-5.500z" fill="none" stroke="#000" stroke-width="1.700"/><path d="M0 6.500h15" stroke="#000" stroke-width="1.400"/></svg>
<span class="t" style="left:688px;top:108px;font-size:12px;line-height:12px;">画删除线</span>
<svg style="left:744px;top:112px" width="10" height="5" viewBox="0 0 10 5"><path d="M0 0h10 l-5 5z" fill="#000"/></svg>
<div style="left:430px;top:127px;width:1476px;height:860px;background:#f0f0f0"></div>
<div style="left:430px;top:127px;width:1px;height:859px;background:#a0a0a0"></div>
<div style="left:430px;top:127px;width:1476px;height:1px;background:#6e6e6e"></div>
<div style="left:464px;top:147px;width:5px;height:822px;background:#e6e6e6"></div>
<div style="left:1167px;top:147px;width:4px;height:822px;background:#dedede"></div>
<div style="left:431px;top:128px;width:33px;height:19px;background:#f0f0f0;border-right:1px solid #9c9c9c;border-bottom:1px solid #9c9c9c;border-left:1px solid #fff;border-top:1px solid #fff;"></div>
<svg style="left:450px;top:134px" width="13" height="12" viewBox="0 0 13 12"><path d="M13 0L1 12M13 4L5 12M13 8L9 12" stroke="#b4b4b4" stroke-width="1"/></svg>
<div style="left:464px;top:128px;width:6px;height:19px;background:#f0f0f0;border-right:1px solid #9c9c9c;border-bottom:1px solid #9c9c9c;border-left:1px solid #fff;border-top:1px solid #fff;"></div>
<span class="t" style="left:465px;top:133px;font-size:11px;line-height:11px;">.</span>
<div style="left:470px;top:128px;width:28px;height:19px;background:#f0f0f0;border-right:1px solid #9c9c9c;border-bottom:1px solid #9c9c9c;border-left:1px solid #fff;border-top:1px solid #fff;"></div>
<span class="t" style="left:473px;top:130px;font-size:14px;line-height:14px;font-family:'Liberation Serif',serif;">B</span>
<div style="left:498px;top:128px;width:28px;height:19px;background:#f0f0f0;border-right:1px solid #9c9c9c;border-bottom:1px solid #9c9c9c;border-left:1px solid #fff;border-top:1px solid #fff;"></div>
<span class="t c" style="left:482px;top:130px;width:60px;font-size:14px;line-height:14px;font-family:'Liberation Serif',serif;">C</span>
<div style="left:526px;top:128px;width:23px;height:19px;background:#f0f0f0;border-right:1px solid #9c9c9c;border-bottom:1px solid #9c9c9c;border-left:1px solid #fff;border-top:1px solid #fff;"></div>
<span class="t c" style="left:507.5px;top:130px;width:60px;font-size:14px;line-height:14px;font-family:'Liberation Serif',serif;">D</span>
<div style="left:549px;top:128px;width:16px;height:19px;background:#f0f0f0;border-right:1px solid #9c9c9c;border-bottom:1px solid #9c9c9c;border-left:1px solid #fff;border-top:1px solid #fff;"></div>
<span class="t c" style="left:527px;top:130px;width:60px;font-size:14px;line-height:14px;font-family:'Liberation Serif',serif;">E</span>
<div style="left:565px;top:128px;width:20px;height:19px;background:#f0f0f0;border-right:1px solid #9c9c9c;border-bottom:1px solid #9c9c9c;border-left:1px solid #fff;border-top:1px solid #fff;"></div>
<span class="t c" style="left:545px;top:130px;width:60px;font-size:14px;line-height:14px;font-family:'Liberation Serif',serif;">F</span>
<div style="left:585px;top:128px;width:16px;height:19px;background:#f0f0f0;border-right:1px solid #9c9c9c;border-bottom:1px solid #9c9c9c;border-left:1px solid #fff;border-top:1px solid #fff;"></div>
<span class="t c" style="left:563px;top:130px;width:60px;font-size:14px;line-height:14px;font-family:'Liberation Serif',serif;">G</span>
<div style="left:601px;top:128px;width:18px;height:19px;background:#f0f0f0;border-right:1px solid #9c9c9c;border-bottom:1px solid #9c9c9c;border-left:1px solid #fff;border-top:1px solid #fff;"></div>
<span class="t c" style="left:580px;top:130px;width:60px;font-size:14px;line-height:14px;font-family:'Liberation Serif',serif;">H</span>
<div style="left:619px;top:128px;width:14px;height:19px;background:#f0f0f0;border-right:1px solid #9c9c9c;border-bottom:1px solid #9c9c9c;border-left:1px solid #fff;border-top:1px solid #fff;"></div>
<span class="t c" style="left:596px;top:130px;width:60px;font-size:14px;line-height:14px;font-family:'Liberation Serif',serif;">I</span>
<div style="left:633px;top:128px;width:18px;height:19px;background:#f0f0f0;border-right:1px solid #9c9c9c;border-bottom:1px solid #9c9c9c;border-left:1px solid #fff;border-top:1px solid #fff;"></div>
<span class="t c" style="left:612px;top:130px;width:60px;font-size:14px;line-height:14px;font-family:'Liberation Serif',serif;">J</span>
<div style="left:651px;top:128px;width:23px;height:19px;background:#f0f0f0;border-right:1px solid #9c9c9c;border-bottom:1px solid #9c9c9c;border-left:1px solid #fff;border-top:1px solid #fff;"></div>
<span class="t c" style="left:632.5px;top:130px;width:60px;font-size:14px;line-height:14px;font-family:'Liberation Serif',serif;">K</span>
<div style="left:674px;top:128px;width:23px;height:19px;background:#f0f0f0;border-right:1px solid #9c9c9c;border-bottom:1px solid #9c9c9c;border-left:1px solid #fff;border-top:1px solid #fff;"></div>
<span class="t c" style="left:655.5px;top:130px;width:60px;font-size:14px;line-height:14px;font-family:'Liberation Serif',serif;">L</span>
<div style="left:697px;top:128px;width:22px;height:19px;background:#f0f0f0;border-right:1px solid #9c9c9c;border-bottom:1px solid #9c9c9c;border-left:1px solid #fff;border-top:1px solid #fff;"></div>
<span class="t c" style="left:678px;top:130px;width:60px;font-size:14px;line-height:14px;font-family:'Liberation Serif',serif;">M</span>
<div style="left:719px;top:128px;width:22px;height:19px;background:#f0f0f0;border-right:1px solid #9c9c9c;border-bottom:1px solid #9c9c9c;border-left:1px solid #fff;border-top:1px solid #fff;"></div>
<span class="t c" style="left:700px;top:130px;width:60px;font-size:14px;line-height:14px;font-family:'Liberation Serif',serif;">N</span>
<div style="left:741px;top:128px;width:22px;height:19px;background:#f0f0f0;border-right:1px solid #9c9c9c;border-bottom:1px solid #9c9c9c;border-left:1px solid #fff;border-top:1px solid #fff;"></div>
<span class="t c" style="left:722px;top:130px;width:60px;font-size:14px;line-height:14px;font-family:'Liberation Serif',serif;">O</span>
<div style="left:763px;top:128px;width:22px;height:19px;background:#f0f0f0;border-right:1px solid #9c9c9c;border-bottom:1px solid #9c9c9c;border-left:1px solid #fff;border-top:1px solid #fff;"></div>
<span class="t c" style="left:744px;top:130px;width:60px;font-size:14px;line-height:14px;font-family:'Liberation Serif',serif;">P</span>
<div style="left:785px;top:128px;width:22px;height:19px;background:#f0f0f0;border-right:1px solid #9c9c9c;border-bottom:1px solid #9c9c9c;border-left:1px solid #fff;border-top:1px solid #fff;"></div>
<span class="t c" style="left:766px;top:130px;width:60px;font-size:14px;line-height:14px;font-family:'Liberation Serif',serif;">Q</span>
<div style="left:807px;top:128px;width:22px;height:19px;background:#f0f0f0;border-right:1px solid #9c9c9c;border-bottom:1px solid #9c9c9c;border-left:1px solid #fff;border-top:1px solid #fff;"></div>
<span class="t c" style="left:788px;top:130px;width:60px;font-size:14px;line-height:14px;font-family:'Liberation Serif',serif;">R</span>
<div style="left:829px;top:128px;width:22px;height:19px;background:#f0f0f0;border-right:1px solid #9c9c9c;border-bottom:1px solid #9c9c9c;border-left:1px solid #fff;border-top:1px solid #fff;"></div>
<span class="t c" style="left:810px;top:130px;width:60px;font-size:14px;line-height:14px;font-family:'Liberation Serif',serif;">S</span>
<div style="left:851px;top:128px;width:22px;height:19px;background:#f0f0f0;border-right:1px solid #9c9c9c;border-bottom:1px solid #9c9c9c;border-left:1px solid #fff;border-top:1px solid #fff;"></div>
<span class="t c" style="left:832px;top:130px;width:60px;font-size:14px;line-height:14px;font-family:'Liberation Serif',serif;">T</span>
<div style="left:873px;top:128px;width:29px;height:19px;background:#f0f0f0;border-right:1px solid #9c9c9c;border-bottom:1px solid #9c9c9c;border-left:1px solid #fff;border-top:1px solid #fff;"></div>
<span class="t c" style="left:857.5px;top:130px;width:60px;font-size:14px;line-height:14px;font-family:'Liberation Serif',serif;">U</span>
<div style="left:902px;top:128px;width:22px;height:19px;background:#f0f0f0;border-right:1px solid #9c9c9c;border-bottom:1px solid #9c9c9c;border-left:1px solid #fff;border-top:1px solid #fff;"></div>
<span class="t c" style="left:883px;top:130px;width:60px;font-size:14px;line-height:14px;font-family:'Liberation Serif',serif;">V</span>
<div style="left:924px;top:128px;width:22px;height:19px;background:#f0f0f0;border-right:1px solid #9c9c9c;border-bottom:1px solid #9c9c9c;border-left:1px solid #fff;border-top:1px solid #fff;"></div>
<span class="t c" style="left:905px;top:130px;width:60px;font-size:14px;line-height:14px;font-family:'Liberation Serif',serif;">W</span>
<div style="left:946px;top:128px;width:22px;height:19px;background:#f0f0f0;border-right:1px solid #9c9c9c;border-bottom:1px solid #9c9c9c;border-left:1px solid #fff;border-top:1px solid #fff;"></div>
<span class="t c" style="left:927px;top:130px;width:60px;font-size:14px;line-height:14px;font-family:'Liberation Serif',serif;">X</span>
<div style="left:968px;top:128px;width:35px;height:19px;background:#f0f0f0;border-right:1px solid #9c9c9c;border-bottom:1px solid #9c9c9c;border-left:1px solid #fff;border-top:1px solid #fff;"></div>
<span class="t c" style="left:955.5px;top:130px;width:60px;font-size:14px;line-height:14px;font-family:'Liberation Serif',serif;">Y</span>
<div style="left:1003px;top:128px;width:22px;height:19px;background:#f0f0f0;border-right:1px solid #9c9c9c;border-bottom:1px solid #9c9c9c;border-left:1px solid #fff;border-top:1px solid #fff;border-bottom-color:#f0f0f0;"></div>
<span class="t c" style="left:984px;top:130px;width:60px;font-size:14px;line-height:14px;font-family:'Liberation Serif',serif;font-weight:bold;">Z</span>
<div style="left:1025px;top:128px;width:31px;height:19px;background:#f0f0f0;border-right:1px solid #9c9c9c;border-bottom:1px solid #9c9c9c;border-left:1px solid #fff;border-top:1px solid #fff;border-bottom-color:#f0f0f0;"></div>
<span class="t c" style="left:1010.5px;top:130px;width:60px;font-size:14px;line-height:14px;font-family:'Liberation Serif',serif;font-weight:bold;">AA</span>
<div style="left:1056px;top:128px;width:33px;height:19px;background:#f0f0f0;border-right:1px solid #9c9c9c;border-bottom:1px solid #9c9c9c;border-left:1px solid #fff;border-top:1px solid #fff;border-bottom-color:#f0f0f0;"></div>
<span class="t c" style="left:1042.5px;top:130px;width:60px;font-size:14px;line-height:14px;font-family:'Liberation Serif',serif;font-weight:bold;">AB</span>
<div style="left:1089px;top:128px;width:22px;height:19px;background:#f0f0f0;border-right:1px solid #9c9c9c;border-bottom:1px solid #9c9c9c;border-left:1px solid #fff;border-top:1px solid #fff;border-bottom-color:#f0f0f0;"></div>
<span class="t c" style="left:1070px;top:130px;width:60px;font-size:14px;line-height:14px;font-family:'Liberation Serif',serif;font-weight:bold;">AC</span>
<div style="left:1111px;top:128px;width:33px;height:19px;background:#f0f0f0;border-right:1px solid #9c9c9c;border-bottom:1px solid #9c9c9c;border-left:1px solid #fff;border-top:1px solid #fff;border-bottom-color:#f0f0f0;"></div>
<span class="t c" style="left:1097.5px;top:130px;width:60px;font-size:14px;line-height:14px;font-family:'Liberation Serif',serif;font-weight:bold;">AD</span>
<div style="left:1144px;top:128px;width:23px;height:19px;background:#f0f0f0;border-right:1px solid #9c9c9c;border-bottom:1px solid #9c9c9c;border-left:1px solid #fff;border-top:1px solid #fff;border-bottom-color:#f0f0f0;"></div>
<span class="t c" style="left:1125.5px;top:130px;width:60px;font-size:14px;line-height:14px;font-family:'Liberation Serif',serif;font-weight:bold;">AE</span>
<div style="left:1167px;top:128px;width:4px;height:19px;background:#f0f0f0;border-right:1px solid #9c9c9c;border-bottom:1px solid #9c9c9c;border-left:1px solid #fff;border-top:1px solid #fff;"></div>
<div style="left:431px;top:147px;width:33px;height:19px;background:#f0f0f0;border-right:1px solid #9c9c9c;border-bottom:1px solid #9c9c9c;border-left:1px solid #fff;border-top:1px solid #fff;"></div>
<span class="t c" style="left:427.5px;top:149.5px;width:40px;font-size:13.5px;line-height:13.5px;"><span class=a>1</span></span>
<div style="left:431px;top:166px;width:33px;height:31px;background:#f0f0f0;border-right:1px solid #9c9c9c;border-bottom:1px solid #9c9c9c;border-left:1px solid #fff;border-top:1px solid #fff;"></div>
<span class="t c" style="left:427.5px;top:174.5px;width:40px;font-size:13.5px;line-height:13.5px;"><span class=a>2</span></span>
<div style="left:431px;top:197px;width:33px;height:21px;background:#f0f0f0;border-right:1px solid #9c9c9c;border-bottom:1px solid #9c9c9c;border-left:1px solid #fff;border-top:1px solid #fff;"></div>
<span class="t c" style="left:427.5px;top:200.5px;width:40px;font-size:13.5px;line-height:13.5px;"><span class=a>3</span></span>
<div style="left:431px;top:218px;width:33px;height:19px;background:#f0f0f0;border-right:1px solid #9c9c9c;border-bottom:1px solid #9c9c9c;border-left:1px solid #fff;border-top:1px solid #fff;"></div>
<span class="t c" style="left:427.5px;top:220.5px;width:40px;font-size:13.5px;line-height:13.5px;"><span class=a>4</span></span>
<div style="left:431px;top:237px;width:33px;height:19px;background:#f0f0f0;border-right:1px solid #9c9c9c;border-bottom:1px solid #9c9c9c;border-left:1px solid #fff;border-top:1px solid #fff;"></div>
<span class="t c" style="left:427.5px;top:239.5px;width:40px;font-size:13.5px;line-height:13.5px;"><span class=a>5</span></span>
<div style="left:431px;top:256px;width:33px;height:19px;background:#f0f0f0;border-right:1px solid #9c9c9c;border-bottom:1px solid #9c9c9c;border-left:1px solid #fff;border-top:1px solid #fff;"></div>
<span class="t c" style="left:427.5px;top:258.5px;width:40px;font-size:13.5px;line-height:13.5px;"><span class=a>6</span></span>
<div style="left:431px;top:275px;width:33px;height:19px;background:#f0f0f0;border-right:1px solid #9c9c9c;border-bottom:1px solid #9c9c9c;border-left:1px solid #fff;border-top:1px solid #fff;"></div>
<span class="t c" style="left:427.5px;top:277.5px;width:40px;font-size:13.5px;line-height:13.5px;"><span class=a>7</span></span>
<div style="left:431px;top:294px;width:33px;height:19px;background:#f0f0f0;border-right:1px solid #9c9c9c;border-bottom:1px solid #9c9c9c;border-left:1px solid #fff;border-top:1px solid #fff;"></div>
<span class="t c" style="left:427.5px;top:296.5px;width:40px;font-size:13.5px;line-height:13.5px;"><span class=a>8</span></span>
<div style="left:431px;top:313px;width:33px;height:19px;background:#f0f0f0;border-right:1px solid #9c9c9c;border-bottom:1px solid #9c9c9c;border-left:1px solid #fff;border-top:1px solid #fff;"></div>
<span class="t c" style="left:427.5px;top:315.5px;width:40px;font-size:13.5px;line-height:13.5px;"><span class=a>9</span></span>
<div style="left:431px;top:332px;width:33px;height:19px;background:#f0f0f0;border-right:1px solid #9c9c9c;border-bottom:1px solid #9c9c9c;border-left:1px solid #fff;border-top:1px solid #fff;"></div>
<span class="t c" style="left:427.5px;top:334.5px;width:40px;font-size:13.5px;line-height:13.5px;"><span class=a>10</span></span>
<div style="left:431px;top:351px;width:33px;height:19px;background:#f0f0f0;border-right:1px solid #9c9c9c;border-bottom:1px solid #9c9c9c;border-left:1px solid #fff;border-top:1px solid #fff;"></div>
<span class="t c" style="left:427.5px;top:353.5px;width:40px;font-size:13.5px;line-height:13.5px;"><span class=a>11</span></span>
<div style="left:431px;top:370px;width:33px;height:19px;background:#f0f0f0;border-right:1px solid #9c9c9c;border-bottom:1px solid #9c9c9c;border-left:1px solid #fff;border-top:1px solid #fff;"></div>
<span class="t c" style="left:427.5px;top:372.5px;width:40px;font-size:13.5px;line-height:13.5px;"><span class=a>12</span></span>
<div style="left:431px;top:389px;width:33px;height:19px;background:#f0f0f0;border-right:1px solid #9c9c9c;border-bottom:1px solid #9c9c9c;border-left:1px solid #fff;border-top:1px solid #fff;"></div>
<span class="t c" style="left:427.5px;top:391.5px;width:40px;font-size:13.5px;line-height:13.5px;"><span class=a>13</span></span>
<div style="left:431px;top:408px;width:33px;height:19px;background:#f0f0f0;border-right:1px solid #9c9c9c;border-bottom:1px solid #9c9c9c;border-left:1px solid #fff;border-top:1px solid #fff;"></div>
<span class="t c" style="left:427.5px;top:410.5px;width:40px;font-size:13.5px;line-height:13.5px;"><span class=a>14</span></span>
<div style="left:431px;top:427px;width:33px;height:19px;background:#f0f0f0;border-right:1px solid #9c9c9c;border-bottom:1px solid #9c9c9c;border-left:1px solid #fff;border-top:1px solid #fff;"></div>
<span class="t c" style="left:427.5px;top:429.5px;width:40px;font-size:13.5px;line-height:13.5px;"><span class=a>15</span></span>
<div style="left:431px;top:446px;width:33px;height:19px;background:#f0f0f0;border-left:1px solid #fff;border-top:1px solid #fff;border-bottom:1px solid #9c9c9c;"></div>
<span class="t c" style="left:427.5px;top:448.5px;width:40px;font-size:13.5px;line-height:13.5px;"><b style="font-family:'Liberation Serif',serif;font-size:14px">16</b></span>
<div style="left:431px;top:465px;width:33px;height:19px;background:#f0f0f0;border-right:1px solid #9c9c9c;border-bottom:1px solid #9c9c9c;border-left:1px solid #fff;border-top:1px solid #fff;"></div>
<span class="t c" style="left:427.5px;top:467.5px;width:40px;font-size:13.5px;line-height:13.5px;"><span class=a>17</span></span>
<div style="left:431px;top:484px;width:33px;height:19px;background:#f0f0f0;border-right:1px solid #9c9c9c;border-bottom:1px solid #9c9c9c;border-left:1px solid #fff;border-top:1px solid #fff;"></div>
<span class="t c" style="left:427.5px;top:486.5px;width:40px;font-size:13.5px;line-height:13.5px;"><span class=a>18</span></span>
<div style="left:431px;top:503px;width:33px;height:19px;background:#f0f0f0;border-right:1px solid #9c9c9c;border-bottom:1px solid #9c9c9c;border-left:1px solid #fff;border-top:1px solid #fff;"></div>
<span class="t c" style="left:427.5px;top:505.5px;width:40px;font-size:13.5px;line-height:13.5px;"><span class=a>19</span></span>
<div style="left:431px;top:522px;width:33px;height:31px;background:#f0f0f0;border-right:1px solid #9c9c9c;border-bottom:1px solid #9c9c9c;border-left:1px solid #fff;border-top:1px solid #fff;"></div>
<span class="t c" style="left:427.5px;top:530.5px;width:40px;font-size:13.5px;line-height:13.5px;"><span class=a>20</span></span>
<div style="left:431px;top:553px;width:33px;height:31px;background:#f0f0f0;border-right:1px solid #9c9c9c;border-bottom:1px solid #9c9c9c;border-left:1px solid #fff;border-top:1px solid #fff;"></div>
<span class="t c" style="left:427.5px;top:561.5px;width:40px;font-size:13.5px;line-height:13.5px;"><span class=a>21</span></span>
<div style="left:431px;top:584px;width:33px;height:31px;background:#f0f0f0;border-right:1px solid #9c9c9c;border-bottom:1px solid #9c9c9c;border-left:1px solid #fff;border-top:1px solid #fff;"></div>
<span class="t c" style="left:427.5px;top:592.5px;width:40px;font-size:13.5px;line-height:13.5px;"><span class=a>22</span></span>
<div style="left:431px;top:615px;width:33px;height:31px;background:#f0f0f0;border-right:1px solid #9c9c9c;border-bottom:1px solid #9c9c9c;border-left:1px solid #fff;border-top:1px solid #fff;"></div>
<span class="t c" style="left:427.5px;top:623.5px;width:40px;font-size:13.5px;line-height:13.5px;"><span class=a>23</span></span>
<div style="left:431px;top:646px;width:33px;height:19px;background:#f0f0f0;border-right:1px solid #9c9c9c;border-bottom:1px solid #9c9c9c;border-left:1px solid #fff;border-top:1px solid #fff;"></div>
<span class="t c" style="left:427.5px;top:648.5px;width:40px;font-size:13.5px;line-height:13.5px;"><span class=a>24</span></span>
<div style="left:431px;top:665px;width:33px;height:19px;background:#f0f0f0;border-right:1px solid #9c9c9c;border-bottom:1px solid #9c9c9c;border-left:1px solid #fff;border-top:1px solid #fff;"></div>
<span class="t c" style="left:427.5px;top:667.5px;width:40px;font-size:13.5px;line-height:13.5px;"><span class=a>25</span></span>
<div style="left:431px;top:684px;width:33px;height:19px;background:#f0f0f0;border-right:1px solid #9c9c9c;border-bottom:1px solid #9c9c9c;border-left:1px solid #fff;border-top:1px solid #fff;"></div>
<span class="t c" style="left:427.5px;top:686.5px;width:40px;font-size:13.5px;line-height:13.5px;"><span class=a>26</span></span>
<div style="left:431px;top:703px;width:33px;height:19px;background:#f0f0f0;border-right:1px solid #9c9c9c;border-bottom:1px solid #9c9c9c;border-left:1px solid #fff;border-top:1px solid #fff;"></div>
<span class="t c" style="left:427.5px;top:705.5px;width:40px;font-size:13.5px;line-height:13.5px;"><span class=a>27</span></span>
<div style="left:431px;top:722px;width:33px;height:35px;background:#f0f0f0;border-right:1px solid #9c9c9c;border-bottom:1px solid #9c9c9c;border-left:1px solid #fff;border-top:1px solid #fff;"></div>
<span class="t c" style="left:427.5px;top:732.5px;width:40px;font-size:13.5px;line-height:13.5px;"><span class=a>28</span></span>
<div style="left:431px;top:757px;width:33px;height:19px;background:#f0f0f0;border-right:1px solid #9c9c9c;border-bottom:1px solid #9c9c9c;border-left:1px solid #fff;border-top:1px solid #fff;"></div>
<span class="t c" style="left:427.5px;top:759.5px;width:40px;font-size:13.5px;line-height:13.5px;"><span class=a>29</span></span>
<div style="left:431px;top:776px;width:33px;height:19px;background:#f0f0f0;border-right:1px solid #9c9c9c;border-bottom:1px solid #9c9c9c;border-left:1px solid #fff;border-top:1px solid #fff;"></div>
<span class="t c" style="left:427.5px;top:778.5px;width:40px;font-size:13.5px;line-height:13.5px;"><span class=a>30</span></span>
<div style="left:431px;top:795px;width:33px;height:19px;background:#f0f0f0;border-right:1px solid #9c9c9c;border-bottom:1px solid #9c9c9c;border-left:1px solid #fff;border-top:1px solid #fff;"></div>
<span class="t c" style="left:427.5px;top:797.5px;width:40px;font-size:13.5px;line-height:13.5px;"><span class=a>31</span></span>
<div style="left:431px;top:814px;width:33px;height:19px;background:#f0f0f0;border-right:1px solid #9c9c9c;border-bottom:1px solid #9c9c9c;border-left:1px solid #fff;border-top:1px solid #fff;"></div>
<span class="t c" style="left:427.5px;top:816.5px;width:40px;font-size:13.5px;line-height:13.5px;"><span class=a>32</span></span>
<div style="left:431px;top:833px;width:33px;height:19px;background:#f0f0f0;border-right:1px solid #9c9c9c;border-bottom:1px solid #9c9c9c;border-left:1px solid #fff;border-top:1px solid #fff;"></div>
<span class="t c" style="left:427.5px;top:835.5px;width:40px;font-size:13.5px;line-height:13.5px;"><span class=a>33</span></span>
<div style="left:431px;top:852px;width:33px;height:19px;background:#f0f0f0;border-right:1px solid #9c9c9c;border-bottom:1px solid #9c9c9c;border-left:1px solid #fff;border-top:1px solid #fff;"></div>
<span class="t c" style="left:427.5px;top:854.5px;width:40px;font-size:13.5px;line-height:13.5px;"><span class=a>34</span></span>
<div style="left:431px;top:871px;width:33px;height:18px;background:#f0f0f0;border-right:1px solid #9c9c9c;border-bottom:1px solid #9c9c9c;border-left:1px solid #fff;border-top:1px solid #fff;"></div>
<span class="t c" style="left:427.5px;top:873px;width:40px;font-size:13.5px;line-height:13.5px;"><span class=a>35</span></span>
<div style="left:431px;top:889px;width:33px;height:20px;background:#f0f0f0;border-right:1px solid #9c9c9c;border-bottom:1px solid #9c9c9c;border-left:1px solid #fff;border-top:1px solid #fff;"></div>
<span class="t c" style="left:427.5px;top:892px;width:40px;font-size:13.5px;line-height:13.5px;"><span class=a>36</span></span>
<div style="left:431px;top:909px;width:33px;height:18px;background:#f0f0f0;border-right:1px solid #9c9c9c;border-bottom:1px solid #9c9c9c;border-left:1px solid #fff;border-top:1px solid #fff;"></div>
<span class="t c" style="left:427.5px;top:911px;width:40px;font-size:13.5px;line-height:13.5px;"><span class=a>37</span></span>
<div style="left:431px;top:927px;width:33px;height:18px;background:#f0f0f0;border-right:1px solid #9c9c9c;border-bottom:1px solid #9c9c9c;border-left:1px solid #fff;border-top:1px solid #fff;"></div>
<span class="t c" style="left:427.5px;top:929px;width:40px;font-size:13.5px;line-height:13.5px;"><span class=a>38</span></span>
<div style="left:431px;top:945px;width:33px;height:20px;background:#f0f0f0;border-right:1px solid #9c9c9c;border-bottom:1px solid #9c9c9c;border-left:1px solid #fff;border-top:1px solid #fff;"></div>
<span class="t c" style="left:427.5px;top:948px;width:40px;font-size:13.5px;line-height:13.5px;"><span class=a>39</span></span>
<div style="left:431px;top:965px;width:33px;height:5px;background:#f0f0f0;border-right:1px solid #9c9c9c;border-bottom:1px solid #9c9c9c;border-left:1px solid #fff;border-top:1px solid #fff;"></div>
<div style="left:469px;top:147px;width:697px;height:70px;background:#e0e0e0"></div>
<div style="left:470px;top:165px;width:695px;height:1px;background:#e9e9e9"></div>
<div style="left:470px;top:196px;width:695px;height:1px;background:#e9e9e9"></div>
<span class="t s13" style="left:1071px;top:149px;font-size:13px;line-height:13px;">建筑节能<span class=a>B-1-2</span></span>
<span class="t c" style="left:517.5px;top:171px;width:600px;font-size:21.5px;line-height:21.5px;">民用建筑节能审查备案登记表<span class=a>(</span>公共建筑部分<span class=a>)</span></span>
<span class="t c" style="left:456.5px;top:200px;width:120px;font-size:13px;line-height:13px;">所属区<span class=a>(</span>县<span class=a>)</span></span>
<div style="left:565px;top:197px;width:85px;height:20px;background:#fff"></div>
<div style="left:968px;top:197px;width:198px;height:20px;background:#fff"></div>
<span class="t s13" style="left:1049px;top:200px;font-size:13px;line-height:13px;">年　月　日</span>
<div class="cell sc" style="left:469px;top:217px;width:698px;height:20px;"><span>一、建筑工程项目基本情况</span></div>
<div class="cell sc" style="left:469px;top:236px;width:150px;height:39px;"></div>
<div style="left:470px;top:256px;width:148px;height:18px;background:#f4c7a1"></div>
<span class="t c" style="left:443.5px;top:239px;width:200px;font-size:13px;line-height:13px;">建设单位名称</span>
<div class="cell sc" style="left:618px;top:236px;width:211px;height:39px;"><span>（章）</span></div>
<div class="cell sc" style="left:828px;top:236px;width:45px;height:20px;"><span>设计</span></div>
<div class="cell sc" style="left:828px;top:255px;width:45px;height:20px;"><span>施工</span></div>
<div class="cell sc" style="left:872px;top:236px;width:96px;height:39px;"><span>单位名称</span></div>
<div class="cell sc cw" style="left:967px;top:236px;width:200px;height:39px;"></div>
<div class="cell sc" style="left:469px;top:274px;width:150px;height:20px;"><span>工程项目名称</span></div>
<div class="cell sc cp" style="left:618px;top:274px;width:211px;height:20px;"><span><span class=a>453</span></span></div>
<div class="cell sc" style="left:828px;top:274px;width:140px;height:20px;"><span>单位工程名称</span></div>
<div class="cell sc cp" style="left:967px;top:274px;width:200px;height:20px;"></div>
<div class="cell sc" style="left:469px;top:293px;width:150px;height:20px;"><span>建筑类型</span></div>
<div class="cell sc cw" style="left:618px;top:293px;width:211px;height:20px;"></div>
<div class="cell sc" style="left:828px;top:293px;width:140px;height:20px;"><span>层<span class=a>   </span>数</span></div>
<div class="cell sc cp" style="left:967px;top:293px;width:200px;height:20px;"></div>
<div class="cell sc" style="left:469px;top:312px;width:150px;height:20px;"><span>设计建筑面积<span class=a>(m</span>²<span class=a>)</span></span></div>
<div class="cell sc cw" style="left:618px;top:312px;width:211px;height:20px;"></div>
<div class="cell sc" style="left:828px;top:312px;width:140px;height:20px;"><span>实际竣工面积<span class=a>(m</span>²<span class=a>)</span></span></div>
<div class="cell sc cw" style="left:967px;top:312px;width:200px;height:20px;"></div>
<div class="cell sc" style="left:469px;top:331px;width:698px;height:20px;"><span>二、围护结构技术措施基本情况</span></div>
<div class="cell sc" style="left:469px;top:350px;width:29px;height:539px;"><span><span style="line-height:13px;display:block">施<br>工<br>图<br>设<br>计<br>执<br>行<br>现<br>行<br>公<br>共<br>建<br>筑<br>节<br>能<br>设<br>计<br>标<br>准<br>及<br>相<br>关<br>规<br>定<br>等<br>情<br>况</span></span></div>
<div class="cell sc" style="left:497px;top:350px;width:332px;height:20px;"><span>项　目</span></div>
<div class="cell sc" style="left:828px;top:350px;width:175px;height:20px;"><span>限值<span class=a>(</span>标准指标<span class=a>)</span></span></div>
<div class="cell sc" style="left:1002px;top:350px;width:165px;height:20px;"><span>实际结果<span class=a>(</span>计算值<span class=a>)</span></span></div>
<div class="cell sc" style="left:497px;top:369px;width:29px;height:353px;"><span><span style="line-height:26px;display:block">外<br>围<br>护<br>结<br>构</span></span></div>
<div class="cell sc" style="left:525px;top:369px;width:76px;height:58px;"><span>传热系<br>数<span class=a>K</span>值<br><span class=a>W/</span><br><span class=a>(m</span>²<span class=d>·</span><span class=a>K)</span></span></div>
<div class="cell sc" style="left:600px;top:369px;width:229px;height:20px;"><span>屋面</span></div>
<div class="cell sc" style="left:828px;top:369px;width:175px;height:20px;"><span><span class=w>≤</span><span class=a>0.70</span></span></div>
<div class="cell sc cw" style="left:1002px;top:369px;width:165px;height:20px;"></div>
<div class="cell sc" style="left:600px;top:388px;width:229px;height:20px;"><span>外墙<span class=a>(</span>包括非透明幕墙<span class=a>)</span>平均</span></div>
<div class="cell sc" style="left:828px;top:388px;width:175px;height:20px;"><span><span class=w>≤</span><span class=a>1.0</span></span></div>
<div class="cell sc cw" style="left:1002px;top:388px;width:165px;height:20px;"></div>
<div class="cell sc" style="left:600px;top:407px;width:229px;height:20px;"><span>底面室外空气的架空或外挑楼板</span></div>
<div class="cell sc" style="left:828px;top:407px;width:175px;height:20px;"><span><span class=w>≤</span><span class=a>1.0</span></span></div>
<div class="cell sc cw" style="left:1002px;top:407px;width:165px;height:20px;"></div>
<div class="cell sc" style="left:600px;top:426px;width:229px;height:20px;"><span>地面</span></div>
<div class="cell sc" style="left:828px;top:426px;width:175px;height:20px;"><span><span class=w>≥</span><span class=a>1.2</span></span></div>
<div class="cell sc cw" style="left:1002px;top:426px;width:165px;height:20px;"></div>
<div class="cell sc" style="left:600px;top:445px;width:229px;height:20px;"><span>地下室外墙<span class=a>(</span>与土壤的墙<span class=a>)</span></span></div>
<div class="cell sc" style="left:828px;top:445px;width:175px;height:20px;"><span><span class=w>≥</span><span class=a>1.2</span></span></div>
<div class="cell sc cw" style="left:1002px;top:445px;width:165px;height:20px;"></div>
<div class="cell sc" style="left:600px;top:464px;width:229px;height:20px;"><span>传热系统<span class=a>(K</span>值<span class=a>)</span></span></div>
<div class="cell sc" style="left:828px;top:464px;width:175px;height:20px;"><span><span class=w>≤</span><span class=a>3.0</span></span></div>
<div class="cell sc cw" style="left:1002px;top:464px;width:165px;height:20px;"></div>
<div class="cell sc" style="left:600px;top:483px;width:229px;height:20px;"><span>遮阳系数<span class=a>(SC)</span></span></div>
<div class="cell sc" style="left:828px;top:483px;width:175px;height:20px;"><span><span class=w>≤</span><span class=a>0.40</span></span></div>
<div class="cell sc cw" style="left:1002px;top:483px;width:165px;height:20px;"></div>
<div class="cell sc" style="left:600px;top:502px;width:229px;height:20px;"><span>面积<span class=a>(%)</span></span></div>
<div class="cell sc" style="left:828px;top:502px;width:175px;height:20px;"><span><span class=w>≤</span><span class=a>20%</span></span></div>
<div class="cell sc cw" style="left:1002px;top:502px;width:165px;height:20px;"></div>
<div class="cell sc" style="left:525px;top:426px;width:76px;height:39px;"><span>热阻 <span class=a>(m</span>²<br><span class=d>·</span><span class=a>K)/W</span></span></div>
<div class="cell sc" style="left:525px;top:464px;width:76px;height:58px;"><span>屋顶透<br>明部分</span></div>
<div class="cell sc" style="left:525px;top:521px;width:76px;height:125px;"><span>气密<br>性能</span></div>
<div class="cell sc" style="left:600px;top:521px;width:74px;height:63px;"><span>外窗分级</span></div>
<div class="cell sc" style="left:600px;top:583px;width:74px;height:63px;"><span>透明幕<br>墙分级</span></div>
<div class="cell sc" style="left:673px;top:521px;width:156px;height:32px;"><span>单位缝长分级<br><span class=a>q</span><span style="font-size:8px;vertical-align:-2px;line-height:0">1</span> （<span class=a>m³/m</span><span class=d>·</span><span class=a>h</span>）</span></div>
<div class="cell sc" style="left:673px;top:552px;width:156px;height:32px;"><span>单位面积分级<br><span class=a>q</span><span style="font-size:8px;vertical-align:-2px;line-height:0">2</span> （<span class=a>m³/m</span><span class=d>·</span><span class=a>h</span>）</span></div>
<div class="cell sc" style="left:673px;top:583px;width:156px;height:32px;"><span>可开启部分<br><span class=a>q(m</span>³<span class=a>/m</span><span class=d>·</span><span class=a>h)</span></span></div>
<div class="cell sc" style="left:673px;top:614px;width:156px;height:32px;"><span>固定部分<br><span class=a>q(m</span>³<span class=a>/m</span><span class=d>·</span><span class=a>h)</span></span></div>
<div class="cell sc" style="left:828px;top:521px;width:45px;height:63px;"><span><span class=w>≥</span><span class=a>4</span>级</span></div>
<div class="cell sc" style="left:828px;top:583px;width:45px;height:63px;"><span><span class=w>≤</span><span class=a>3</span>级</span></div>
<div class="cell sc" style="left:872px;top:521px;width:131px;height:32px;"><span><span class=a>1.5</span><span class=w>≥</span><span class=a>q</span><span style="font-size:8px;vertical-align:-2px;line-height:0">1</span> ＞<span class=a>0.5</span></span></div>
<div class="cell sc" style="left:872px;top:552px;width:131px;height:32px;"><span><span class=a>1.5</span><span class=w>≥</span><span class=a>q</span><span style="font-size:8px;vertical-align:-2px;line-height:0">2</span> ＞<span class=a>1.5</span></span></div>
<div class="cell sc" style="left:872px;top:583px;width:131px;height:32px;"><span><span class=a>1.5</span>＜<span class=a>q</span><span class=w>≤</span><span class=a>2.5</span></span></div>
<div class="cell sc" style="left:872px;top:614px;width:131px;height:32px;"><span><span class=a>0.05</span>＜<span class=a>q</span><span class=w>≤</span><span class=a>0.10</span></span></div>
<div class="cell sc cw" style="left:1002px;top:521px;width:165px;height:32px;"></div>
<div class="cell sc cw" style="left:1002px;top:552px;width:165px;height:32px;"></div>
<div class="cell sc cw" style="left:1002px;top:583px;width:165px;height:32px;"></div>
<div class="cell sc cw" style="left:1002px;top:614px;width:165px;height:32px;"></div>
<div class="cell sc" style="left:525px;top:645px;width:76px;height:77px;"><span>其余<br>部位<br>说明</span></div>
<div class="cell sc" style="left:600px;top:645px;width:207px;height:20px;"><span>外门</span></div>
<div class="cell sc" style="left:600px;top:664px;width:207px;height:20px;"><span>外墙、屋面热桥部位技术措施</span></div>
<div class="cell sc" style="left:600px;top:683px;width:207px;height:20px;"><span>中庭夏季通风、排风</span></div>
<div class="cell sc" style="left:600px;top:702px;width:207px;height:20px;"><span>透明幕墙通风形式</span></div>
<div class="cell sc" style="left:806px;top:645px;width:361px;height:20px;"></div>
<div class="cell sc" style="left:806px;top:664px;width:162px;height:20px;"></div>
<div class="cell sc" style="left:967px;top:664px;width:200px;height:20px;"></div>
<div class="cell sc" style="left:806px;top:683px;width:361px;height:20px;"></div>
<div class="cell sc" style="left:806px;top:702px;width:361px;height:20px;"></div>
<div style="left:851px;top:646px;width:21px;height:18px;background:#fff"></div>
<div style="left:924px;top:646px;width:21px;height:18px;background:#fff"></div>
<div style="left:1003px;top:646px;width:21px;height:18px;background:#fff"></div>
<div style="left:1089px;top:646px;width:21px;height:18px;background:#fff"></div>
<span class="t s13" style="left:823px;top:647.5px;font-size:13px;line-height:13px;">门斗</span>
<div class="cb" style="left:853px;top:647.5px;width:15px;height:15px;"></div>
<span class="t s13" style="left:896px;top:647.5px;font-size:13px;line-height:13px;">旋转</span>
<div class="cb" style="left:926px;top:647.5px;width:15px;height:15px;"></div>
<span class="t s13" style="left:975.5px;top:647.5px;font-size:13px;line-height:13px;">中空</span>
<div class="cb" style="left:1005px;top:647.5px;width:15px;height:15px;"></div>
<span class="t s13" style="left:1061px;top:647.5px;font-size:13px;line-height:13px;">其他</span>
<div class="cb" style="left:1091px;top:647.5px;width:15px;height:15px;"></div>
<div style="left:873px;top:665px;width:28px;height:18px;background:#fff"></div>
<div style="left:924px;top:665px;width:21px;height:18px;background:#fff"></div>
<div style="left:1025px;top:665px;width:30px;height:18px;background:#fff"></div>
<div style="left:1089px;top:665px;width:21px;height:18px;background:#fff"></div>
<span class="t s13" style="left:825px;top:666.5px;font-size:13px;line-height:13px;">外墙<span class=a>:</span>有</span>
<div class="cb" style="left:875px;top:666.5px;width:15px;height:15px;"></div>
<span class="t s13" style="left:908px;top:666.5px;font-size:13px;line-height:13px;">无</span>
<div class="cb" style="left:926px;top:666.5px;width:15px;height:15px;"></div>
<span class="t s13" style="left:977px;top:666.5px;font-size:13px;line-height:13px;">屋面<span class=a>:</span>有</span>
<div class="cb" style="left:1027px;top:666.5px;width:15px;height:15px;"></div>
<span class="t s13" style="left:1074px;top:666.5px;font-size:13px;line-height:13px;">无</span>
<div class="cb" style="left:1091px;top:666.5px;width:15px;height:15px;"></div>
<div style="left:851px;top:684px;width:21px;height:18px;background:#fff"></div>
<div style="left:924px;top:684px;width:21px;height:18px;background:#fff"></div>
<span class="t s13" style="left:823px;top:685.5px;font-size:13px;line-height:13px;">机械</span>
<div class="cb" style="left:853px;top:685.5px;width:15px;height:15px;"></div>
<span class="t s13" style="left:896px;top:685.5px;font-size:13px;line-height:13px;">自然</span>
<div class="cb" style="left:926px;top:685.5px;width:15px;height:15px;"></div>
<div style="left:902px;top:703px;width:21px;height:18px;background:#fff"></div>
<div style="left:946px;top:703px;width:21px;height:18px;background:#fff"></div>
<div style="left:1089px;top:703px;width:21px;height:18px;background:#fff"></div>
<div style="left:1144px;top:703px;width:22px;height:18px;background:#fff"></div>
<span class="t s13" style="left:812px;top:704.5px;font-size:13px;line-height:13px;">可开启部分<span class=a>:</span>有</span>
<div class="cb" style="left:904px;top:704.5px;width:15px;height:15px;"></div>
<span class="t s13" style="left:928px;top:704.5px;font-size:13px;line-height:13px;">无</span>
<div class="cb" style="left:948.5px;top:704.5px;width:15px;height:15px;"></div>
<span class="t s13" style="left:980px;top:704.5px;font-size:13px;line-height:13px;">通风排气装置<span class=a>:</span>有</span>
<div class="cb" style="left:1091px;top:704.5px;width:15px;height:15px;"></div>
<span class="t s13" style="left:1121.5px;top:704.5px;font-size:13px;line-height:13px;">无</span>
<div class="cb" style="left:1147px;top:704.5px;width:15px;height:15px;"></div>
<div class="cell sc" style="left:497px;top:721px;width:29px;height:131px;"><span><span style="line-height:13.3px;display:block">外<br>窗<br><span class=a>(</span>包<br>括<br>透<br>明<br>幕<br>墙<span class=a>)</span></span></span></div>
<div class="cell sc" style="left:525px;top:721px;width:76px;height:36px;"><span>朝向</span></div>
<div class="cell sc" style="left:600px;top:721px;width:97px;height:36px;line-height:14px"><span>实际窗墙面积<br>比<span class=a>(</span>计算值<span class=a>)</span></span></div>
<div class="cell sc" style="left:696px;top:721px;width:89px;height:36px;line-height:14px"><span>实际传热系<br>统<span class=a>(</span>计算值<span class=a>)</span></span></div>
<div class="cell sc" style="left:784px;top:721px;width:67px;height:36px;line-height:14px"><span>遮阳系数<br><span class=a>(</span>计算值<span class=a>)</span></span></div>
<div class="cell sc" style="left:850px;top:721px;width:96px;height:36px;line-height:14px"><span>可开启面积<br><span class=a>(</span>计算值<span class=a>)</span></span></div>
<div class="cell sc" style="left:945px;top:721px;width:111px;height:36px;line-height:14px"><span>可见光投射<br>比<span class=a>(</span>计算值<span class=a>)</span></span></div>
<div class="cell sc" style="left:1055px;top:721px;width:112px;height:36px;line-height:14px"><span>遮阳形式</span></div>
<div class="cell sc" style="left:525px;top:756px;width:76px;height:39px;"><span>东</span></div>
<div class="cell sc cw" style="left:600px;top:756px;width:97px;height:39px;"></div>
<div class="cell sc cw" style="left:696px;top:756px;width:89px;height:39px;"></div>
<div class="cell sc cw" style="left:784px;top:756px;width:67px;height:39px;"></div>
<div class="cell sc cw" style="left:850px;top:756px;width:96px;height:39px;"></div>
<div class="cell sc cw" style="left:945px;top:756px;width:111px;height:39px;"></div>
<div class="cell sc" style="left:1055px;top:756px;width:112px;height:39px;"></div>
<div class="cell sc" style="left:525px;top:794px;width:76px;height:20px;"><span>南</span></div>
<div class="cell sc cw" style="left:600px;top:794px;width:97px;height:20px;"></div>
<div class="cell sc cw" style="left:696px;top:794px;width:89px;height:20px;"></div>
<div class="cell sc cw" style="left:784px;top:794px;width:67px;height:20px;"></div>
<div class="cell sc cw" style="left:850px;top:794px;width:96px;height:20px;"></div>
<div class="cell sc cw" style="left:945px;top:794px;width:111px;height:20px;"></div>
<div class="cell sc cw" style="left:1055px;top:794px;width:112px;height:20px;"></div>
<div class="cell sc" style="left:525px;top:813px;width:76px;height:20px;"><span>西</span></div>
<div class="cell sc cw" style="left:600px;top:813px;width:97px;height:20px;"></div>
<div class="cell sc cw" style="left:696px;top:813px;width:89px;height:20px;"></div>
<div class="cell sc cw" style="left:784px;top:813px;width:67px;height:20px;"></div>
<div class="cell sc cw" style="left:850px;top:813px;width:96px;height:20px;"></div>
<div class="cell sc cw" style="left:945px;top:813px;width:111px;height:20px;"></div>
<div class="cell sc cw" style="left:1055px;top:813px;width:112px;height:20px;"></div>
<div class="cell sc" style="left:525px;top:832px;width:76px;height:20px;"><span>北</span></div>
<div class="cell sc cw" style="left:600px;top:832px;width:97px;height:20px;"></div>
<div class="cell sc cw" style="left:696px;top:832px;width:89px;height:20px;"></div>
<div class="cell sc cw" style="left:784px;top:832px;width:67px;height:20px;"></div>
<div class="cell sc cw" style="left:850px;top:832px;width:96px;height:20px;"></div>
<div class="cell sc cw" style="left:945px;top:832px;width:111px;height:20px;"></div>
<div class="cell sc cw" style="left:1055px;top:832px;width:112px;height:20px;"></div>
<div style="left:1089px;top:757px;width:21px;height:37px;background:#fff"></div>
<div style="left:1144px;top:757px;width:22px;height:37px;background:#fff"></div>
<div style="left:1056px;top:775px;width:109px;height:1px;background:#ececec"></div>
<span class="t s13" style="left:1074px;top:758.5px;font-size:13px;line-height:13px;">内</span>
<div class="cb" style="left:1091px;top:758.5px;width:15px;height:15px;"></div>
<span class="t s13" style="left:1129px;top:758.5px;font-size:13px;line-height:13px;">外</span>
<div class="cb" style="left:1147px;top:758.5px;width:15px;height:15px;"></div>
<span class="t s13" style="left:1060px;top:777.5px;font-size:13px;line-height:13px;">固定</span>
<div class="cb" style="left:1091px;top:777.5px;width:15px;height:15px;"></div>
<span class="t s13" style="left:1115px;top:777.5px;font-size:13px;line-height:13px;">活动</span>
<div class="cb" style="left:1147px;top:777.5px;width:15px;height:15px;"></div>
<div class="cell sc" style="left:497px;top:851px;width:104px;height:38px;"><span>围护结构热工<br>性能权衡判断</span></div>
<div class="cell sc" style="left:600px;top:851px;width:346px;height:20px;"><span>参照建筑物的采暖和空气调节能耗<span class=a>(kW</span><span class=d>·</span><span class=a>h/m</span>²<span class=a>)</span></span></div>
<div class="cell sc" style="left:600px;top:870px;width:346px;height:19px;"><span>设计建筑物的采暖和空气调节能耗<span class=a>(kW</span><span class=d>·</span><span class=a>h/m</span>²<span class=a>)</span></span></div>
<div class="cell sc cw" style="left:945px;top:851px;width:222px;height:20px;"></div>
<div class="cell sc cw" style="left:945px;top:870px;width:222px;height:19px;"></div>
<div class="cell sc" style="left:469px;top:888px;width:29px;height:96px;align-items:flex-start"><span><span style="line-height:13px;display:block;margin-top:46px">主<br>要<br>节<br>能</span></span></div>
<div class="cell sc" style="left:497px;top:888px;width:104px;height:57px;"><span>外墙</span></div>
<div class="cell sc" style="left:600px;top:888px;width:97px;height:21px;"><span>保温型式</span></div>
<div class="cell sc cw" style="left:696px;top:888px;width:471px;height:21px;"></div>
<div class="cell sc" style="left:600px;top:908px;width:97px;height:37px;"><span>保温材料种类</span></div>
<div class="cell sc" style="left:696px;top:908px;width:67px;height:37px;"><span>选用厚<br>度<span class=a>(mm)</span></span></div>
<div class="cell sc cw" style="left:762px;top:908px;width:67px;height:37px;"></div>
<div class="cell sc" style="left:828px;top:908px;width:74px;height:37px;"><span>水平厚度<br>面积<span class=a>(mm)</span></span></div>
<div class="cell sc cw" style="left:901px;top:908px;width:67px;height:37px;"></div>
<div class="cell sc" style="left:967px;top:908px;width:89px;height:37px;"><span>外 墙<br>颜 色</span></div>
<div class="cell sc" style="left:1055px;top:908px;width:112px;height:37px;"></div>
<div style="left:1110px;top:909px;width:56px;height:35px;background:#fff"></div>
<div style="left:1056px;top:926px;width:109px;height:1px;background:#ececec"></div>
<span class="t s13" style="left:1083px;top:910px;font-size:13px;line-height:13px;">深色</span>
<div class="cb" style="left:1113px;top:910px;width:15px;height:15px;"></div>
<span class="t s13" style="left:1083px;top:928px;font-size:13px;line-height:13px;">浅色</span>
<div class="cb" style="left:1113px;top:928px;width:15px;height:15px;"></div>
<div class="cell sc" style="left:497px;top:944px;width:104px;height:21px;"><span>屋面</span></div>
<div class="cell sc" style="left:600px;top:944px;width:97px;height:21px;"><span>保温材料种类</span></div>
<div class="cell sc cw" style="left:696px;top:944px;width:250px;height:21px;"></div>
<div class="cell sc" style="left:945px;top:944px;width:111px;height:21px;"><span>选用厚度<span class=a>(mm)</span></span></div>
<div class="cell sc cw" style="left:1055px;top:944px;width:112px;height:21px;"></div>
<div class="cell sc" style="left:497px;top:964px;width:104px;height:20px;"></div>
<div class="cell sc" style="left:600px;top:964px;width:97px;height:20px;"><span>窗框型材</span></div>
<div class="cell sc" style="left:696px;top:964px;width:471px;height:20px;"></div>
<span class="t s13" style="left:705px;top:966px;font-size:13px;line-height:13px;">塑料</span>
<span class="t s13" style="left:774px;top:966px;font-size:13px;line-height:13px;">金属材料</span>
<span class="t s13" style="left:887px;top:966px;font-size:13px;line-height:13px;">断热金属材料</span>
<span class="t s13" style="left:1032px;top:966px;font-size:13px;line-height:13px;">其他</span>
<div class="cb" style="left:744px;top:965px;width:15px;height:15px;"></div>
<div class="cb" style="left:832px;top:965px;width:15px;height:15px;"></div>
<div class="cb" style="left:971px;top:965px;width:15px;height:15px;"></div>
<div class="cb" style="left:1058px;top:965px;width:15px;height:15px;"></div>
<div style="left:468px;top:216px;width:2px;height:753px;background:#000"></div>
<div style="left:1165px;top:216px;width:2px;height:753px;background:#000"></div>
<div style="left:468px;top:216px;width:699px;height:2px;background:#000"></div>
<div style="left:1001px;top:444px;width:168px;height:22px;border:3px double #000;background:#fff"></div>
<div style="left:1164px;top:461px;width:5px;height:6px;background:#000;border:1px solid #fff;border-right:none;border-bottom:none"></div>
<div style="left:431px;top:969px;width:1474px;height:17px;background:#f0f0f0"></div>
<div style="left:431px;top:969px;width:1458px;height:1px;background:#a0a0a0"></div>
<div style="left:431px;top:970px;width:17px;height:16px;background:#f0f0f0;border-right:1px solid #a0a0a0;border-left:1px solid #fff"></div>
<div style="left:448px;top:970px;width:17px;height:16px;background:#f0f0f0;border-right:1px solid #a0a0a0;border-left:1px solid #fff"></div>
<div style="left:465px;top:970px;width:17px;height:16px;background:#f0f0f0;border-right:1px solid #a0a0a0;border-left:1px solid #fff"></div>
<div style="left:482px;top:970px;width:17px;height:16px;background:#f0f0f0;border-right:1px solid #a0a0a0;border-left:1px solid #fff"></div>
<svg style="left:434px;top:973px" width="10" height="10" viewBox="0 0 10 10"><path d="M1.500 0v10" stroke="#000" stroke-width="1.500"/><path d="M9 0v10l-6-5z" fill="#000"/></svg>
<svg style="left:453px;top:973px" width="8" height="10" viewBox="0 0 8 10"><path d="M7 0v10l-6-5z" fill="#000"/></svg>
<svg style="left:470px;top:973px" width="8" height="10" viewBox="0 0 8 10"><path d="M1 0v10l6-5z" fill="#000"/></svg>
<svg style="left:486px;top:973px" width="10" height="10" viewBox="0 0 10 10"><path d="M8.500 0v10" stroke="#000" stroke-width="1.500"/><path d="M1 0v10l6-5z" fill="#000"/></svg>
<svg style="left:499px;top:969px" width="112" height="17" viewBox="0 0 112 17"><path d="M1.500 0l7.500 16.500h42l7-16.500z" fill="#fff"/><path d="M1.500 0l7.500 16.500" fill="none" stroke="#000"/><path d="M59 0l-7 16.500" stroke="#000"/><path d="M55.500 8l3.500 8.500" stroke="#000"/><path d="M109 0l-7 16.500" fill="none" stroke="#000"/></svg>
<span class="t" style="left:515.5px;top:972px;font-size:12px;line-height:12px;">第<span class=a>1</span>页</span>
<span class="t" style="left:565.5px;top:972px;font-size:12px;line-height:12px;">第<span class=a>2</span>页</span>
<div style="left:430px;top:986px;width:1476px;height:1px;background:#696969"></div>
<div style="left:1888px;top:128px;width:17px;height:858px;background:repeating-conic-gradient(#fff 0 25%,#ececec 0 50%) 0 0/2px 2px"></div>
<div style="left:1888px;top:128px;width:17px;height:17px;background:#f0f0f0;border:1px solid #fff;border-right:2px solid #696969;border-bottom:2px solid #696969;"></div>
<svg style="left:1892px;top:134px" width="8" height="5" viewBox="0 0 8 5"><path d="M0 4.500h8l-4-4.500z" fill="#000"/></svg>
<div style="left:1888px;top:145px;width:17px;height:670px;background:#f0f0f0;border:1px solid #fff;border-right:2px solid #696969;border-bottom:2px solid #696969;"></div>
<div style="left:1888px;top:952px;width:17px;height:17px;background:#f0f0f0;border:1px solid #fff;border-right:2px solid #696969;border-bottom:2px solid #696969;"></div>
<svg style="left:1892px;top:958px" width="8" height="5" viewBox="0 0 8 5"><path d="M0 0h8l-4 4.500z" fill="#000"/></svg>
<div style="left:1888px;top:969px;width:17px;height:17px;background:#f0f0f0"></div>
<div style="left:1905px;top:127px;width:1px;height:859px;background:#696969"></div>
<div style="left:0px;top:983px;width:418px;height:4px;background:#fff"></div>
<div style="left:0px;top:983px;width:414px;height:1px;background:#c8c8c8"></div>
<div style="left:0px;top:986px;width:418px;height:1px;background:#909090"></div>
<div style="left:0px;top:987px;width:1908px;height:6px;background:#f0f0f0"></div>
<div style="left:0px;top:987px;width:1908px;height:1px;background:#fff"></div>
<div style="left:0px;top:988px;width:1908px;height:1px;background:#c6c6c6"></div>
<div style="left:0px;top:989px;width:1908px;height:3px;background:#dadada"></div>
<div style="left:0px;top:992px;width:1908px;height:1px;background:#fdfdfd"></div>
<div style="left:0px;top:993px;width:1908px;height:14px;background:#f0f0f0"></div>
<div style="left:264px;top:994px;width:1px;height:12px;background:#c4c4c4"></div>
<div style="left:265px;top:994px;width:1px;height:12px;background:#fff"></div>
<div style="left:268px;top:994px;width:1px;height:12px;background:#c4c4c4"></div>
<div style="left:392px;top:994px;width:1px;height:12px;background:#c4c4c4"></div>
<div style="left:393px;top:994px;width:1px;height:12px;background:#fff"></div>
<div style="left:396px;top:994px;width:1px;height:12px;background:#c4c4c4"></div>
<div style="left:526px;top:994px;width:1px;height:12px;background:#c4c4c4"></div>
<div style="left:527px;top:994px;width:1px;height:12px;background:#fff"></div>
<div style="left:530px;top:994px;width:1px;height:12px;background:#c4c4c4"></div>
<div style="left:626px;top:994px;width:1px;height:12px;background:#c4c4c4"></div>
<div style="left:627px;top:994px;width:1px;height:12px;background:#fff"></div>
<div style="left:630px;top:994px;width:1px;height:12px;background:#c4c4c4"></div>
<div style="left:1711px;top:994px;width:1px;height:12px;background:#c4c4c4"></div>
<div style="left:1712px;top:994px;width:1px;height:12px;background:#fff"></div>
<div style="left:1715px;top:994px;width:1px;height:12px;background:#c4c4c4"></div>
<span class="t" style="left:-7px;top:994px;font-size:12px;line-height:12px;">筑业软件<span class=a>-</span>您身边的建筑软件 <span class=a>www.zhuyew.cn</span></span>
<span class="t" style="left:273px;top:994px;font-size:12px;line-height:12px;">当前用户<span class=a>:</span> 管理员</span>
<span class="t" style="left:400px;top:994px;font-size:12px;line-height:12px;">版本号<span class=a>: 10.4.0.116</span></span>
<span class="t" style="left:1163px;top:994px;font-size:12px;line-height:12px;color:#2e94dc"><span class=a>0%</span></span>
<span class="t" style="left:1805px;top:994px;font-size:12px;line-height:12px;"><span class=a>2019/4/9 18:32:03</span></span>
<div style="left:0px;top:1006px;width:1908px;height:10px;background:linear-gradient(90deg,#34444c 0,#42525a 4%,#566a76 33%,#5a6e7a 60%,#46565e 72%,#4e626c 90%,#566a74 100%)"></div>
<div style="left:0px;top:1008px;width:1908px;height:8px;background:linear-gradient(rgba(255,255,255,.10),rgba(0,0,0,.12))"></div>
<div style="left:0px;top:1006px;width:1908px;height:1px;background:#1c2428"></div>
<div style="left:620px;top:1007px;width:1288px;height:1px;background:#7e94a2"></div>
<div style="left:66px;top:1007px;width:59px;height:9px;background:linear-gradient(#c4ccd0,#98a4aa);border:1px solid #e8eef0;border-bottom:none;border-radius:3px 3px 0 0"></div>
<div style="left:128px;top:1007px;width:59px;height:9px;background:linear-gradient(#c4ccd0,#98a4aa);border:1px solid #e8eef0;border-bottom:none;border-radius:3px 3px 0 0"></div>
<div style="left:190px;top:1007px;width:59px;height:9px;background:linear-gradient(#c4ccd0,#98a4aa);border:1px solid #e8eef0;border-bottom:none;border-radius:3px 3px 0 0"></div>
<div style="left:252px;top:1007px;width:59px;height:9px;background:linear-gradient(#c4ccd0,#98a4aa);border:1px solid #e8eef0;border-bottom:none;border-radius:3px 3px 0 0"></div>
<div style="left:314px;top:1007px;width:59px;height:9px;background:linear-gradient(#c4ccd0,#98a4aa);border:1px solid #e8eef0;border-bottom:none;border-radius:3px 3px 0 0"></div>
<div style="left:376px;top:1007px;width:59px;height:9px;background:linear-gradient(#c4ccd0,#98a4aa);border:1px solid #e8eef0;border-bottom:none;border-radius:3px 3px 0 0"></div>
<div style="left:438px;top:1007px;width:59px;height:9px;background:linear-gradient(#c4ccd0,#98a4aa);border:1px solid #e8eef0;border-bottom:none;border-radius:3px 3px 0 0"></div>
<div style="left:500px;top:1007px;width:59px;height:9px;background:linear-gradient(#c4ccd0,#98a4aa);border:1px solid #e8eef0;border-bottom:none;border-radius:3px 3px 0 0"></div>
<div style="left:562px;top:1007px;width:59px;height:9px;background:linear-gradient(#c4ccd0,#98a4aa);border:1px solid #e8eef0;border-bottom:none;border-radius:3px 3px 0 0"></div>
<div style="left:80px;top:1009px;width:30px;height:7px;background:#4caa50;border-radius:3px 3px 0 0"></div>
<div style="left:148px;top:1009px;width:18px;height:7px;background:#3b8ed8;border-radius:3px 3px 0 0"></div>
<div style="left:204px;top:1009px;width:28px;height:7px;background:#b090e0;border-radius:3px 3px 0 0"></div>
<div style="left:264px;top:1009px;width:34px;height:7px;background:#2f9be8;border-radius:3px 3px 0 0"></div>
<div style="left:330px;top:1009px;width:24px;height:7px;background:#a03818;border-radius:3px 3px 0 0"></div>
<div style="left:396px;top:1009px;width:18px;height:7px;background:#3b8ed8;border-radius:3px 3px 0 0"></div>
<div style="left:450px;top:1009px;width:30px;height:7px;background:#e8b850;border-radius:3px 3px 0 0"></div>
<div style="left:518px;top:1009px;width:22px;height:7px;background:#d8d8d8;border-radius:3px 3px 0 0"></div>
<div style="left:574px;top:1009px;width:36px;height:7px;background:#8aa;border-radius:3px 3px 0 0"></div>
<div style="left:6px;top:1007px;width:52px;height:9px;background:radial-gradient(ellipse at 50% 150%,#d8a050 0,#7ab0d8 35%,#2c3c44 75%);border-radius:26px 26px 0 0"></div>
<div style="left:1895px;top:1007px;width:13px;height:9px;background:#7e8e94;border-left:1px solid #9aa8ae"></div>
<span class="t" style="left:1843px;top:1011px;font-size:11px;line-height:11px;color:#fff"><span class=a>18:32</span></span>
<svg style="left:1410px;top:679px" width="13" height="20" viewBox="0 0 13 20"><path d="M.700 .700v15.300l3.600-3.300 2.600 6 2.600-1.100-2.500-5.800h4.700z" fill="#fff" stroke="#101018" stroke-width="1.100" stroke-linejoin="round"/></svg>
<div style="left:1891px;top:957px;width:48px;height:48px;border-radius:50%;background:#4fba5f;border:2px solid #e8f0e8;box-shadow:0 0 2px #666"></div>
<div style="left:1900px;top:963px;width:20px;height:11px;background:rgba(150,170,160,.75)"></div>
<span class="t" style="left:1897px;top:973px;font-size:13px;line-height:13px;color:#fff;font-weight:bold"><span class=a>78</span></span>
</body></html>
